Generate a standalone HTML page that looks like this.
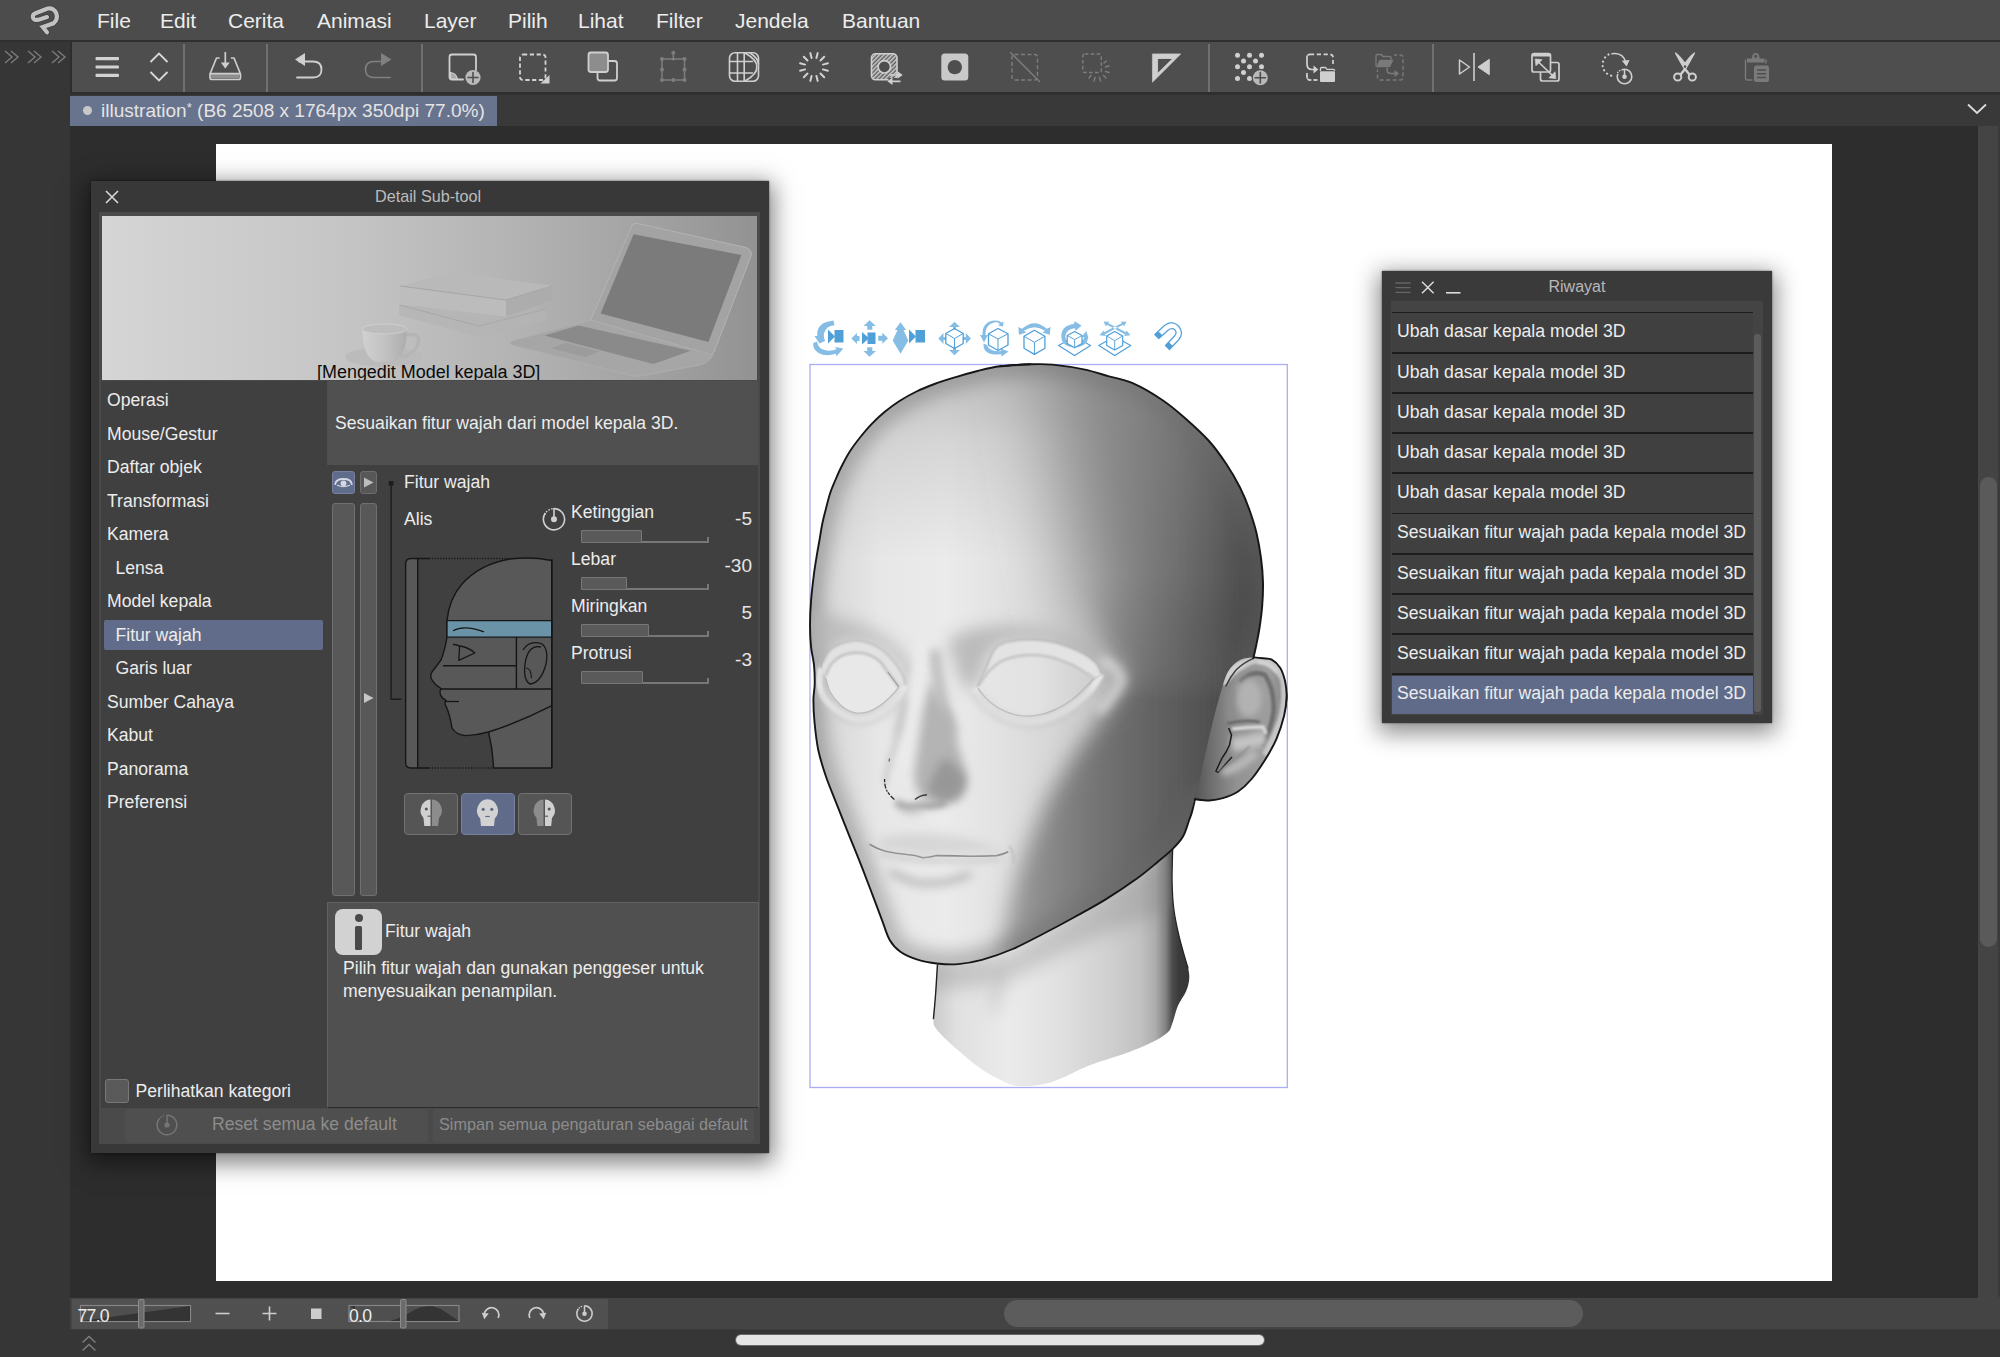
<!DOCTYPE html>
<html lang="id">
<head>
<meta charset="utf-8">
<title>illustration - Detail Sub-tool</title>
<style>
*{box-sizing:border-box;margin:0;padding:0}
html,body{width:2000px;height:1357px;overflow:hidden;background:#2d2d2d}
body{font-family:"Liberation Sans",sans-serif;color:#e6e6e6;position:relative}
.a{position:absolute}
.t{position:absolute;white-space:nowrap;line-height:1}
#menubar{left:0;top:0;width:2000px;height:40px;background:#4c4c4c}
#menuline{left:0;top:40px;width:2000px;height:2px;background:#2f2f2f}
#menubar .t{font-size:21px;top:10px;color:#ececec}
#leftstrip{left:0;top:42px;width:70px;height:1315px;background:#363636}
#toolbar{left:72px;top:42px;width:1928px;height:50px;background:#4e4e4e}
#toolline{left:70px;top:92px;width:1930px;height:3px;background:#2f2f2f}
#tabbar{left:70px;top:95px;width:1930px;height:31px;background:#393939}
#tab{left:70px;top:95.5px;width:427px;height:30px;background:#68738d}
#workarea{left:70px;top:126px;width:1907px;height:1172px;background:#2d2d2d}
#paper{left:216px;top:144px;width:1616px;height:1137px;background:#fff}
#vscroll{left:1978px;top:126px;width:22px;height:1172px;background:#444}
#bottombar{left:70px;top:1298px;width:1930px;height:32px;background:#444}
#footer{left:70px;top:1330px;width:1930px;height:27px;background:#363636}
.sep{position:absolute;top:44px;width:1.6px;height:48px;background:#707070}
</style>
</head>
<body>
<!-- MENU BAR -->
<div class="a" id="menubar">
<span class="t" style="left:97px">File</span>
<span class="t" style="left:160px">Edit</span>
<span class="t" style="left:228px">Cerita</span>
<span class="t" style="left:317px">Animasi</span>
<span class="t" style="left:424px">Layer</span>
<span class="t" style="left:508px">Pilih</span>
<span class="t" style="left:578px">Lihat</span>
<span class="t" style="left:656px">Filter</span>
<span class="t" style="left:735px">Jendela</span>
<span class="t" style="left:842px">Bantuan</span>
</div>
<div class="a" id="menuline"></div>
<div class="a" id="leftstrip"></div>
<div class="a" id="toolbar"></div>
<div class="a" id="toolline"></div>
<div class="a" id="tabbar"></div>
<div class="a" id="tab"></div>
<div class="a" id="workarea"></div>
<div class="a" id="paper"></div>
<div class="a" id="vscroll"></div>
<div class="a" id="bottombar"></div>
<div class="a" id="footer"></div>
<!--TOOLBAR-ICONS-START-->
<svg class="a" style="left:0;top:0" width="2000" height="130" viewBox="0 0 2000 130" fill="none" stroke-linecap="round" stroke-linejoin="round">
<!-- app logo -->
<path d="M47 17.100 L38.600 19.700 Q33.500 20.800 32.800 17 Q32.600 14.300 35.500 13.200 L47.500 8.500 Q53.500 7.500 56.200 13 Q58.500 19.500 53.500 23.300 L42.800 27 L47 32.300" stroke="#3a3a3a" stroke-width="5.600" stroke-linecap="round" stroke-linejoin="round"/>
<path d="M47 17.100 L38.600 19.700 Q33.500 20.800 32.800 17 Q32.600 14.300 35.500 13.200 L47.500 8.500 Q53.500 7.500 56.200 13 Q58.500 19.500 53.500 23.300 L42.800 27 L47 32.300" stroke="#c2c2c2" stroke-width="4.200" stroke-linecap="round" stroke-linejoin="miter"/>
<!-- chevrons >> >> >> -->
<g stroke="#7c7c7c" stroke-width="1.4" stroke-linecap="butt" stroke-linejoin="miter">
<path d="M5 51 L12 57 L5 63 M11 51 L18 57 L11 63"/>
<path d="M28 51 L35 57 L28 63 M34 51 L41 57 L34 63"/>
<path d="M52 51 L59 57 L52 63 M58 51 L65 57 L58 63"/>
</g>
<!-- hamburger -->
<g fill="#d2d2d2" stroke="none"><rect x="95.5" y="57" width="23.5" height="3.2" rx="1"/><rect x="95.5" y="65.4" width="23.5" height="3.2" rx="1"/><rect x="95.5" y="73.8" width="23.5" height="3.2" rx="1"/></g>
<!-- up/down -->
<path d="M150.5 62 L159 53.5 L167.5 62 M150.5 72 L159 80.5 L167.5 72" stroke="#d8d8d8" stroke-width="1.8" stroke-linecap="butt" stroke-linejoin="miter"/>
<!-- save -->
<g stroke="#cdcdcd" stroke-width="1.7">
<path d="M219 58 L216.5 58 L210 74 L210 77.5 Q210 79.5 212 79.5 L238.5 79.5 Q240.5 79.5 240.5 77.5 L240.5 74 L234 58 L231.5 58"/>
<path d="M225.3 52.5 L225.3 67"/>
<rect x="211" y="74" width="28.5" height="4.5" fill="#8e8e8e" stroke="none"/>
<path d="M210.3 73.6 L240.2 73.6"/>
</g>
<path d="M220.8 62.5 L229.8 62.5 L225.3 68.5 Z" fill="#cdcdcd"/>
<!-- undo -->
<path d="M299 61.5 L313 61.5 Q321.5 61.5 321.5 69.5 Q321.5 77.5 313 77.5 L297 77.5" stroke="#cfcfcf" stroke-width="1.8"/>
<path d="M305 53 L305 66 L295 59.5 Z" fill="#cfcfcf"/>
<!-- redo (dim) -->
<path d="M386 61.5 L374 61.5 Q365.5 61.5 365.5 69.5 Q365.5 77.5 374 77.5 L390 77.5" stroke="#808080" stroke-width="1.6"/>
<path d="M381 53 L381 66 L391.5 59.5 Z" fill="#808080"/>
<!-- new layer -->
<path d="M476 70 L476 57 Q476 54.5 473.5 54.5 L452 54.5 Q449.5 54.5 449.5 57 L449.5 77 Q449.5 79.5 452 79.5 L463 79.5" stroke="#cfcfcf" stroke-width="1.8"/>
<path d="M450.5 72.5 Q456 73 457.5 79 L450.5 79 Z" fill="#a9a9a9" stroke="#cfcfcf" stroke-width="1.2"/>
<circle cx="473" cy="77.5" r="7.6" fill="#b9b9b9"/>
<path d="M473 72.5 L473 82.5 M468 77.5 L478 77.5" stroke="#4e4e4e" stroke-width="1.6"/>
<!-- dashed select -->
<rect x="520" y="54.5" width="25.5" height="25.5" rx="3" stroke="#d2d2d2" stroke-width="1.8" stroke-dasharray="4.2 2.6" stroke-linecap="butt"/>
<path d="M549.5 75 L549.5 83.5 L540.5 83.5 Z" fill="#cfcfcf"/>
<!-- overlapping squares -->
<rect x="597.5" y="61" width="19.5" height="19.5" rx="2.5" stroke="#cfcfcf" stroke-width="1.8"/>
<rect x="588.5" y="52.5" width="19.5" height="19.5" rx="2.5" fill="#8d8d8d" stroke="#cfcfcf" stroke-width="1.8"/>
<!-- transform (dim) -->
<g stroke="#7e7e7e" stroke-width="1.5"><rect x="662" y="59" width="22.5" height="21"/><path d="M673.3 59 L673.3 53"/></g>
<g fill="#7e7e7e"><circle cx="673.3" cy="52.8" r="2"/><circle cx="662" cy="59" r="2"/><circle cx="684.5" cy="59" r="2"/><circle cx="662" cy="69.5" r="2"/><circle cx="684.5" cy="69.5" r="2"/><circle cx="662" cy="80" r="2"/><circle cx="673.3" cy="80" r="2"/><circle cx="684.5" cy="80" r="2"/><circle cx="673.3" cy="59" r="1.6"/></g>
<!-- mesh -->
<g stroke="#cfcfcf" stroke-width="1.600">
<rect x="729.500" y="52.800" width="29" height="28.500" rx="5.500"/>
<path d="M737.500 53 L737.500 81 M744.200 53 L744.200 81 M729.500 61.500 L752.500 61.500 M729.500 73 L752.500 73"/>
<path d="M745 53 Q757.500 60 756.800 67 Q757.500 74 745 81"/>
<path d="M750 53 Q758 58 758.500 64"/>
</g>
<!-- spinner -->
<g stroke="#d2d2d2" stroke-width="2" stroke-linecap="round" id="spin">
<path d="M816.4 58.1 L817.7 53.1"/><path d="M820.5 60.5 L824.2 56.8"/><path d="M822.9 64.6 L827.9 63.3"/><path d="M822.9 69.4 L827.9 70.7"/><path d="M820.5 73.5 L824.2 77.2"/><path d="M816.4 75.9 L817.7 80.9"/><path d="M811.6 75.9 L810.3 80.9"/><path d="M807.5 73.5 L803.8 77.2"/><path d="M805.1 69.4 L800.1 70.7"/><path d="M805.1 64.6 L800.1 63.3"/><path d="M807.5 60.5 L803.8 56.8"/><path d="M811.6 58.1 L810.3 53.1"/>
</g>
<!-- quick mask -->
<defs><pattern id="hat" width="3" height="3" patternUnits="userSpaceOnUse" patternTransform="rotate(45)"><rect width="3" height="3" fill="#5a5a5a"/><rect width="1.6" height="3" fill="#c9c9c9"/></pattern></defs>
<rect x="871.5" y="53.8" width="25.5" height="26" rx="4" fill="url(#hat)" stroke="#cfcfcf" stroke-width="1.6"/>
<circle cx="884.3" cy="66.8" r="6.2" fill="#4e4e4e" stroke="#cfcfcf" stroke-width="1.7"/>
<path d="M888.5 72 L900 72 L900 78 L888.5 78 L888.5 84.5 L901 84.5 L901 72 Z" fill="#4e4e4e" stroke="none"/>
<path d="M889.5 75 L899 75 M891 81.3 L900.5 81.3" stroke="#cfcfcf" stroke-width="1.7" stroke-linecap="butt"/>
<path d="M897.5 71.3 L902.7 75 L897.5 78.7 Z M892.5 77.6 L887.3 81.3 L892.5 85 Z" fill="#cfcfcf"/>
<!-- filled mask -->
<rect x="941.3" y="53.6" width="27" height="27" rx="3.5" fill="#c9c9c9"/>
<circle cx="954.8" cy="67.1" r="7.2" fill="#4e4e4e"/>
<!-- dashed diag (dim) -->
<g stroke="#7e7e7e" stroke-width="1.4"><rect x="1012" y="54.5" width="25.5" height="25.5" rx="2.5" stroke-dasharray="4 2.5" stroke-linecap="butt"/><path d="M1010.5 52.5 L1039.5 81.5"/></g>
<!-- dashed rays (dim) -->
<g stroke="#7e7e7e" stroke-width="1.4"><rect x="1082.8" y="54" width="18.5" height="18.5" rx="2" stroke-dasharray="3.6 2.3" stroke-linecap="butt"/>
<path d="M1104 63 L1106.5 61 M1105.5 67 L1109 66 M1105.5 71.5 L1109 72.5 M1103.5 75.5 L1106 78 M1099.5 77.5 L1100.5 81 M1095 77.5 L1094 81 M1091 75.5 L1089 78"/></g>
<!-- triangle ruler -->
<path d="M1152.8 54 L1180.6 54 L1152.8 81.8 Z M1157.6 58.800 L1157.600 73.500 L1172.500 58.800 Z" fill="#cfcfcf" fill-rule="evenodd" stroke="#cfcfcf" stroke-width="0.8"/>
<!-- dots + plus -->
<g fill="#cfcfcf">
<circle cx="1237.5" cy="55.2" r="2.5"/><circle cx="1249.5" cy="55.2" r="2.5"/><circle cx="1261.5" cy="55.2" r="2.5"/>
<circle cx="1243.5" cy="61" r="2.5"/><circle cx="1255.5" cy="61" r="2.5"/>
<circle cx="1237.5" cy="66.8" r="2.5"/><circle cx="1249.5" cy="66.8" r="2.5"/><circle cx="1261.5" cy="66.8" r="2.5"/>
<circle cx="1243.5" cy="72.6" r="2.5"/>
<circle cx="1237.5" cy="78.4" r="2.5"/><circle cx="1249.5" cy="78.4" r="2.5"/>
</g>
<circle cx="1260.3" cy="77.8" r="8.6" fill="#4e4e4e"/><circle cx="1260.3" cy="77.8" r="7.5" fill="#b9b9b9"/>
<path d="M1260.3 72.6 L1260.3 83 M1255.1 77.8 L1265.5 77.8" stroke="#4e4e4e" stroke-width="1.6"/>
<!-- dashed -> folder -->
<rect x="1307" y="54.3" width="26" height="25.7" rx="3" stroke="#d2d2d2" stroke-width="1.7" stroke-dasharray="4.2 2.6" stroke-linecap="butt"/>
<rect x="1303" y="58" width="14" height="15" fill="#4e4e4e" stroke="none"/>
<rect x="1318" y="66" width="19" height="18" fill="#4e4e4e" stroke="none"/>
<path d="M1307 56 L1307 64 Q1307 69.5 1312 69.5 L1315 69.5" stroke="#d2d2d2" stroke-width="1.7"/>
<path d="M1313.5 65.5 L1318.3 69.5 L1313.5 73.5 Z" fill="#d2d2d2"/>
<path d="M1307 75 L1307 77.5 Q1307 80 1309.5 80 L1316 80" stroke="#d2d2d2" stroke-width="1.7" stroke-dasharray="3 2.4" stroke-linecap="butt"/>
<path d="M1320.5 70.5 L1320.5 68.5 Q1320.5 67.5 1321.5 67.5 L1325.5 67.5 L1327 69.3 L1333.5 69.3 Q1334.5 69.3 1334.5 70.3" stroke="#d2d2d2" stroke-width="1.3"/>
<rect x="1320" y="71.3" width="15" height="10.7" rx="1" fill="#cfcfcf"/>
<!-- folder -> dashed (dim) -->
<g stroke="#7a7a7a" stroke-width="1.4"><rect x="1377.5" y="55" width="25.5" height="25" rx="2.5" stroke-dasharray="4 2.5" stroke-linecap="butt"/></g>
<rect x="1373" y="52" width="21" height="17.5" fill="#4e4e4e"/>
<path d="M1376 66 L1376 55.5 Q1376 54.5 1377 54.5 L1381.5 54.5 L1383 56.5 L1390 56.5 Q1391 56.5 1391 57.5 L1391 59.5" stroke="#7a7a7a" stroke-width="1.3"/>
<path d="M1379.5 59.7 L1393.5 59.7 L1390 67.3 L1376 67.3 Z" fill="#7a7a7a"/>
<rect x="1384" y="67.5" width="16" height="9" fill="#4e4e4e"/>
<path d="M1387 68 L1387 70 Q1387 73.5 1391 73.5 L1395 73.5" stroke="#7a7a7a" stroke-width="1.5"/>
<path d="M1394.5 70 L1399 73.5 L1394.5 77 Z" fill="#7a7a7a"/>
<!-- mirror -->
<path d="M1474 53 L1474 81" stroke="#cfcfcf" stroke-width="1.6" stroke-linecap="butt"/>
<path d="M1459.5 60 L1469.5 67 L1459.5 74 Z" stroke="#cfcfcf" stroke-width="1.5"/>
<path d="M1489 59.5 L1478 67 L1489 74.5 Z" fill="#cfcfcf" stroke="#cfcfcf" stroke-width="1"/>
<!-- resize squares -->
<rect x="1540.5" y="62.5" width="18.5" height="18.5" rx="2" stroke="#cfcfcf" stroke-width="1.7"/>
<rect x="1532" y="53.5" width="18.5" height="18.5" rx="2" fill="#4e4e4e" stroke="#cfcfcf" stroke-width="1.7"/>
<path d="M1532.5 55.2 L1550 55.2" stroke="#cfcfcf" stroke-width="2.6" stroke-linecap="butt"/>
<path d="M1538.5 62 L1552.5 75.5" stroke="#cfcfcf" stroke-width="1.7"/>
<path d="M1535.5 59 L1542 59.7 L1536.2 65.5 Z M1555.5 78.5 L1549 77.8 L1554.8 72 Z" fill="#cfcfcf" stroke="#cfcfcf" stroke-width="0.8"/>
<!-- rotate dotted -->
<path d="M1612 53.8 Q1623 52 1626.2 63" stroke="#cfcfcf" stroke-width="1.6"/>
<path d="M1621.8 60.8 L1629.6 60 L1626.6 66.5 Z" fill="#cfcfcf"/>
<path d="M1608.5 54.5 A11.5 11.5 0 0 0 1613 76" stroke="#cfcfcf" stroke-width="2.2" stroke-dasharray="0.1 4.4" stroke-linecap="round"/>
<circle cx="1624.5" cy="76.5" r="7.3" stroke="#cfcfcf" stroke-width="1.6"/>
<rect x="1614" y="66" width="7.5" height="8" fill="#4e4e4e"/>
<path d="M1617.7 72.5 A7.3 7.3 0 0 1 1621.5 69.8" stroke="#cfcfcf" stroke-width="1.6" stroke-dasharray="0.1 2.6"/>
<circle cx="1624.5" cy="76.8" r="2.3" fill="#cfcfcf"/><path d="M1624.5 76 L1624.5 70.5" stroke="#cfcfcf" stroke-width="1.5"/>
<!-- scissors -->
<path d="M1675.5 53 Q1678 58 1685 70 L1687 66.5 Q1681 57 1675.5 53 Z M1694.5 53 Q1692 58 1685 70 L1683 66.5 Q1689 57 1694.5 53 Z" fill="#cfcfcf" stroke="#cfcfcf" stroke-width="1.2"/>
<path d="M1685 69 L1681 74 M1685 69 L1689 74" stroke="#cfcfcf" stroke-width="2.4"/>
<circle cx="1677.7" cy="77" r="3.6" stroke="#cfcfcf" stroke-width="2"/><circle cx="1692.3" cy="77" r="3.6" stroke="#cfcfcf" stroke-width="2"/>
<!-- clipboard (dim) -->
<g stroke="#7a7a7a" stroke-width="1.4"><path d="M1752 80 L1747.5 80 Q1745.5 80 1745.5 78 L1745.5 60"/><path d="M1766 60 L1766 63"/></g>
<path d="M1747 58.5 L1752 58.5 Q1752 53 1755.7 53 Q1759.5 53 1759.5 58.5 L1764.5 58.5 L1764.5 62.5 L1747 62.5 Z" fill="#7a7a7a"/>
<circle cx="1755.7" cy="56.3" r="1.5" fill="#4e4e4e"/>
<rect x="1754" y="65.5" width="15" height="16.5" rx="2.5" fill="#7a7a7a"/>
<path d="M1757.5 70 L1765.5 70 M1757.5 73.8 L1765.5 73.8 M1757.5 77.6 L1765.5 77.6" stroke="#4e4e4e" stroke-width="1.5"/>
<!-- tab bar chevron -->
<path d="M1968 104.5 L1977 113 L1986 104.5" stroke="#dcdcdc" stroke-width="1.8" stroke-linecap="butt" stroke-linejoin="miter"/>
</svg>
<div class="sep" style="left:183px"></div><div class="sep" style="left:266px"></div><div class="sep" style="left:421px"></div><div class="sep" style="left:1208px"></div><div class="sep" style="left:1432px"></div>
<div class="a" style="left:83px;top:105.5px;width:9px;height:9px;border-radius:5px;background:#c8c8c8"></div>
<span class="t" id="tabtxt" style="left:101px;top:101px;font-size:19.05px;color:#e4e4e4">illustration<span style="font-size:13px;vertical-align:5px">*</span> (B6 2508 x 1764px 350dpi 77.0%)</span>
<!--TOOLBAR-ICONS-END-->
<!--CANVAS-START-->
<svg class="a" style="left:800px;top:300px" width="500" height="800" viewBox="800 300 500 800" fill="none">
<defs>
<clipPath id="hc"><path d="M1030.0 364.3 C1038.8 364.0 1043.5 363.8 1052.5 364.6 C1061.5 365.5 1074.4 367.4 1083.8 369.4 C1093.2 371.3 1100.8 374.0 1108.9 376.3 C1117.1 378.6 1123.7 379.2 1132.7 383.2 C1141.7 387.2 1154.1 394.5 1163.0 400.5 C1171.9 406.5 1178.3 412.2 1186.0 419.0 C1193.7 425.8 1202.3 433.6 1209.0 441.0 C1215.7 448.4 1220.8 455.8 1226.0 463.5 C1231.2 471.2 1236.1 479.8 1240.0 487.5 C1243.9 495.2 1246.8 502.4 1249.5 510.0 C1252.2 517.6 1254.6 525.0 1256.5 533.0 C1258.4 541.0 1259.9 549.8 1261.0 558.0 C1262.1 566.2 1262.8 574.0 1263.0 582.0 C1263.2 590.0 1262.8 598.3 1262.2 606.0 C1261.6 613.7 1260.5 621.5 1259.5 628.0 C1258.5 634.5 1257.3 639.9 1256.3 645.0 C1255.3 650.1 1253.8 656.2 1253.3 658.4 C1252.8 660.6 1251.8 658.5 1253.3 658.4 C1254.8 658.3 1259.1 657.8 1262.1 658.0 C1265.0 658.2 1268.5 658.1 1271.0 659.5 C1273.5 660.9 1274.9 663.6 1276.9 666.5 C1278.9 669.4 1281.2 673.2 1282.8 676.9 C1284.4 680.6 1285.7 684.9 1286.4 688.7 C1287.2 692.6 1287.7 695.5 1287.3 700.0 C1286.9 704.5 1285.9 709.3 1284.1 715.8 C1282.3 722.3 1279.7 731.4 1276.5 738.8 C1273.3 746.1 1269.2 753.2 1265.0 759.9 C1260.8 766.6 1256.1 773.7 1251.6 779.0 C1247.1 784.3 1242.9 788.3 1238.1 791.5 C1233.3 794.7 1227.6 796.7 1222.8 798.2 C1218.0 799.7 1214.0 800.3 1209.4 800.5 C1204.8 800.7 1197.9 797.3 1195.0 799.2 C1192.1 801.1 1193.0 808.5 1192.0 812.0 C1191.0 815.5 1190.7 815.9 1189.2 820.0 C1187.7 824.1 1185.8 831.7 1183.0 836.5 C1180.2 841.3 1177.0 844.6 1172.7 848.9 C1168.4 853.2 1163.3 857.3 1157.3 862.3 C1151.3 867.3 1145.2 872.6 1136.6 878.8 C1128.0 885.0 1116.0 893.0 1105.7 899.4 C1095.4 905.8 1085.0 911.3 1074.7 917.0 C1064.4 922.7 1054.1 928.2 1043.8 933.5 C1033.5 938.8 1023.1 944.6 1012.8 949.0 C1002.5 953.4 991.0 957.4 981.9 959.9 C972.8 962.4 965.6 963.5 958.1 964.1 C950.6 964.7 943.6 964.2 936.8 963.5 C930.0 962.8 923.6 961.7 917.5 959.7 C911.4 957.8 905.0 955.1 900.4 951.8 C895.8 948.5 892.7 945.2 889.7 940.0 C886.7 934.8 885.1 928.3 882.3 920.8 C879.4 913.3 876.0 904.0 872.6 895.1 C869.2 886.2 865.9 877.4 862.0 867.4 C858.1 857.4 853.4 846.0 849.1 835.3 C844.8 824.6 840.2 813.2 836.3 803.2 C832.4 793.2 828.6 784.4 825.6 775.5 C822.6 766.6 820.1 758.7 818.2 749.8 C816.4 740.9 815.3 730.3 814.5 722.0 C813.7 713.7 813.4 706.3 813.4 700.0 C813.4 693.7 814.6 690.0 814.7 684.2 C814.8 678.4 814.6 671.1 814.0 665.0 C813.4 658.9 811.8 654.0 811.1 647.4 C810.4 640.8 810.0 633.2 810.0 625.3 C810.0 617.4 810.4 608.8 811.1 600.2 C811.8 591.6 813.0 581.6 814.0 573.7 C815.0 565.8 816.3 558.6 817.2 553.0 C818.1 547.4 818.7 544.7 819.5 540.0 C820.3 535.3 821.1 529.8 822.1 524.7 C823.1 519.6 824.4 514.6 825.8 509.3 C827.1 504.0 828.6 497.9 830.2 493.0 C831.8 488.1 833.5 484.5 835.4 480.0 C837.3 475.5 839.3 470.8 841.8 466.0 C844.2 461.2 846.9 455.9 850.1 451.0 C853.3 446.1 857.2 441.0 860.8 436.5 C864.4 432.0 867.8 427.9 871.8 423.8 C875.8 419.7 879.9 415.8 884.5 412.0 C889.1 408.2 894.2 404.4 899.5 401.0 C904.8 397.6 910.7 394.3 916.5 391.5 C922.3 388.7 928.1 386.4 934.5 384.0 C940.9 381.6 947.8 379.5 955.0 377.3 C962.2 375.1 970.0 372.9 977.5 371.0 C985.0 369.1 991.2 367.3 1000.0 366.2 C1008.8 365.1 1021.2 364.6 1030.0 364.3 Z"/></clipPath>
<clipPath id="nc"><path d="M937.5 950.0 C937.3 954.2 936.8 967.4 936.5 975.0 C936.2 982.6 936.0 988.0 935.5 995.4 C935.0 1002.8 933.1 1013.3 933.4 1019.1 C933.7 1024.9 932.9 1024.7 937.5 1030.4 C942.1 1036.1 953.9 1046.6 961.3 1053.1 C968.7 1059.6 975.0 1064.9 981.9 1069.6 C988.8 1074.2 996.3 1078.2 1002.5 1081.0 C1008.7 1083.8 1012.1 1085.7 1019.0 1086.2 C1025.9 1086.7 1036.2 1085.5 1043.8 1084.0 C1051.4 1082.5 1056.8 1080.0 1064.4 1076.9 C1072.0 1073.8 1078.9 1069.5 1089.2 1065.5 C1099.5 1061.5 1116.0 1056.9 1126.3 1053.1 C1136.6 1049.3 1144.1 1046.2 1151.0 1042.8 C1157.9 1039.4 1164.0 1035.9 1167.6 1032.5 C1171.2 1029.1 1171.0 1026.7 1172.7 1022.2 C1174.4 1017.7 1175.7 1010.9 1177.9 1005.7 C1180.1 1000.5 1184.2 995.7 1186.1 991.2 C1188.0 986.7 1188.8 982.7 1189.2 978.9 C1189.6 975.1 1188.9 972.0 1188.2 968.5 C1187.5 965.0 1186.6 963.7 1185.1 958.2 C1183.5 952.7 1180.8 943.8 1178.9 935.5 C1177.0 927.2 1174.9 917.6 1173.8 908.7 C1172.7 899.8 1172.3 891.9 1172.1 881.9 C1171.9 871.9 1172.6 856.7 1172.7 848.9 C1172.8 841.1 1172.7 837.3 1172.7 835.0 L1100 850 L960 930 Z"/></clipPath>
<clipPath id="ec"><path d="M1254.4 657.4 C1258.2 657.1 1260.1 657.9 1263.0 658.3 C1265.9 658.7 1268.8 658.1 1271.7 659.7 C1274.6 661.3 1278.1 664.3 1280.3 667.9 C1282.5 671.5 1284.0 676.5 1285.1 681.3 C1286.1 686.1 1286.8 690.9 1286.6 696.6 C1286.4 702.4 1285.8 708.8 1284.1 715.8 C1282.4 722.8 1279.7 731.4 1276.5 738.8 C1273.3 746.1 1269.2 753.2 1265.0 759.9 C1260.8 766.6 1256.1 773.7 1251.6 779.0 C1247.1 784.3 1242.9 788.3 1238.1 791.5 C1233.3 794.7 1227.6 796.7 1222.8 798.2 C1218.0 799.7 1214.0 800.3 1209.4 800.5 C1204.8 800.7 1196.9 801.3 1195.0 799.2 C1193.1 797.1 1196.5 794.5 1198.0 788.0 C1199.5 781.5 1201.7 770.5 1204.0 760.0 C1206.3 749.5 1209.3 735.8 1212.0 725.0 C1214.7 714.2 1217.3 703.8 1220.0 695.0 C1222.7 686.2 1224.7 677.8 1228.0 672.0 C1231.3 666.2 1235.6 662.4 1240.0 660.0 C1244.4 657.6 1250.6 657.7 1254.4 657.4 Z"/></clipPath>
<linearGradient id="hbase" gradientUnits="userSpaceOnUse" x1="806" y1="0" x2="1270" y2="0">
<stop offset="0" stop-color="#c4c4c4"/><stop offset=".05" stop-color="#d8d8d8"/><stop offset=".16" stop-color="#e7e7e7"/><stop offset=".3" stop-color="#ebebeb"/><stop offset=".42" stop-color="#e2e2e2"/><stop offset=".55" stop-color="#d4d4d4"/><stop offset=".7" stop-color="#c8c8c8"/><stop offset="1" stop-color="#c0c0c0"/>
</linearGradient>
<linearGradient id="shg" gradientUnits="userSpaceOnUse" x1="1000" y1="0" x2="1270" y2="0">
<stop offset="0" stop-color="#a6a6a6"/><stop offset=".2" stop-color="#989898"/><stop offset=".38" stop-color="#8a8a8a"/><stop offset=".56" stop-color="#7a7a7a"/><stop offset=".74" stop-color="#666"/><stop offset=".88" stop-color="#4e4e4e"/><stop offset="1" stop-color="#3a3a3a"/>
</linearGradient>
<linearGradient id="topdark" gradientUnits="userSpaceOnUse" x1="0" y1="362" x2="0" y2="560"><stop offset="0" stop-color="#8a8a8a" stop-opacity=".5"/><stop offset=".4" stop-color="#8a8a8a" stop-opacity=".22"/><stop offset="1" stop-color="#8a8a8a" stop-opacity="0"/></linearGradient>
<linearGradient id="nbase" gradientUnits="userSpaceOnUse" x1="930" y1="0" x2="1192" y2="0">
<stop offset="0" stop-color="#c8c8c8"/><stop offset=".1" stop-color="#e0e0e0"/><stop offset=".3" stop-color="#ebebeb"/><stop offset=".5" stop-color="#e0e0e0"/><stop offset=".68" stop-color="#d0d0d0"/><stop offset=".8" stop-color="#c2c2c2"/><stop offset=".86" stop-color="#adadad"/><stop offset=".9" stop-color="#828282"/><stop offset=".925" stop-color="#4c4c4c"/><stop offset=".95" stop-color="#3a3a3a"/><stop offset="1" stop-color="#343434"/>
</linearGradient>
<linearGradient id="earg" gradientUnits="userSpaceOnUse" x1="1195" y1="0" x2="1288" y2="0"><stop offset="0" stop-color="#565656"/><stop offset=".2" stop-color="#727272"/><stop offset=".45" stop-color="#929292"/><stop offset=".8" stop-color="#9e9e9e"/><stop offset="1" stop-color="#808080"/></linearGradient>
<linearGradient id="chk" gradientUnits="userSpaceOnUse" x1="1020" y1="0" x2="1150" y2="0"><stop offset="0" stop-color="#8e8e8e"/><stop offset=".45" stop-color="#888" stop-opacity=".9"/><stop offset="1" stop-color="#777" stop-opacity="0"/></linearGradient>
<linearGradient id="reyeg" gradientUnits="userSpaceOnUse" x1="980" y1="0" x2="1095" y2="0"><stop offset="0" stop-color="#e6e6e6"/><stop offset=".5" stop-color="#e2e2e2"/><stop offset="1" stop-color="#cecece"/></linearGradient>
<linearGradient id="shg2" gradientUnits="userSpaceOnUse" x1="1000" y1="0" x2="1270" y2="0">
<stop offset="0" stop-color="#a0a0a0"/><stop offset=".12" stop-color="#909090"/><stop offset=".25" stop-color="#808080"/><stop offset=".4" stop-color="#707070"/><stop offset=".55" stop-color="#646464"/><stop offset=".7" stop-color="#575757"/><stop offset=".85" stop-color="#4a4a4a"/><stop offset="1" stop-color="#3a3a3a"/>
</linearGradient>
<linearGradient id="lmg" gradientUnits="userSpaceOnUse" x1="0" y1="575" x2="0" y2="700"><stop offset="0" stop-color="#000"/><stop offset="1" stop-color="#fff"/></linearGradient>
<mask id="lm" maskUnits="userSpaceOnUse" x="700" y="200" width="800" height="1000"><rect x="700" y="200" width="800" height="1000" fill="url(#lmg)"/></mask>
<filter id="b22" filterUnits="userSpaceOnUse" x="700" y="100" width="900" height="1100"><feGaussianBlur stdDeviation="36"/></filter>
<filter id="b11" filterUnits="userSpaceOnUse" x="700" y="200" width="800" height="1000"><feGaussianBlur stdDeviation="11"/></filter>
<filter id="b3" filterUnits="userSpaceOnUse" x="790" y="300" width="520" height="800"><feGaussianBlur stdDeviation="3"/></filter>
<filter id="b5" filterUnits="userSpaceOnUse" x="790" y="300" width="520" height="800"><feGaussianBlur stdDeviation="5"/></filter>
<filter id="b8" filterUnits="userSpaceOnUse" x="790" y="300" width="520" height="800"><feGaussianBlur stdDeviation="8"/></filter>
<filter id="b14" filterUnits="userSpaceOnUse" x="790" y="300" width="520" height="800"><feGaussianBlur stdDeviation="14"/></filter>
<filter id="b1" filterUnits="userSpaceOnUse" x="790" y="300" width="520" height="800"><feGaussianBlur stdDeviation="1.2"/></filter>
</defs>
<g id="manip">
<!-- 1 camera orbit -->
<g fill="#86bde4">
<path d="M833.500 320.600 L834.500 325.200 Q826 325.500 823.800 334 Q823.500 338 825.200 340.800 L819.500 343.500 L814.500 336 L817.200 336 Q816.500 324 828.500 321.500 Z"/>
<path d="M813.300 343 L817 341.500 Q818 349.500 827 350.600 Q833 351 836.500 349.200 L835 347 L843.300 348.400 L836.500 356.300 L835.800 353.800 Q826 357 818.500 353 Q812.500 349 813.300 343 Z"/>
</g>
<path d="M828 329.500 L835 336.500 L828 343.500 Z" fill="#4f9fd9"/><rect x="834.500" y="330" width="9" height="12.500" fill="#4f9fd9"/>
<!-- 2 camera pan -->
<g fill="#86bde4">
<path d="M869.500 320.300 L876 326 L872.300 326 L872.300 329.800 L867.200 329.800 L867.200 326 L863.500 326 Z"/>
<path d="M869.500 356.800 L876 351 L872.300 351 L872.300 347.200 L867.200 347.200 L867.200 351 L863.500 351 Z"/>
<path d="M851.300 338.500 L857 333 L857 336 L859.500 336 L859.500 341 L857 341 L857 344 Z"/>
<path d="M888 338.300 L882.300 332.800 L882.300 335.800 L878.200 335.800 L878.200 340.800 L882.300 340.800 L882.300 343.800 Z"/>
</g>
<path d="M862 332 L869 338.200 L862 344.500 Z" fill="#4f9fd9"/><rect x="867.500" y="332.500" width="8" height="11.500" fill="#4f9fd9"/>
<!-- 3 camera dolly -->
<path d="M900.500 322.300 L906.200 330 L903.500 330 L908.300 340.500 L900.500 353.800 L892.700 340.500 L897.500 330 L894.800 330 Z" fill="#86bde4"/>
<path d="M909 329.500 L916 336.500 L909 343.500 Z" fill="#4f9fd9"/><rect x="915.500" y="330" width="9.500" height="12.500" fill="#4f9fd9"/>
<!-- 4 cube move -->
<g fill="#86bde4">
<path d="M954.500 321.800 L960 327 L956 327 L956 329.500 L953 329.500 L953 327 L949 327 Z"/>
<path d="M954.500 355.200 L960 350 L956 350 L956 347.500 L953 347.500 L953 350 L949 350 Z"/>
<path d="M938.300 338.500 L943.500 333 L943.500 337 L946 337 L946 340 L943.500 340 L943.500 344 Z"/>
<path d="M971 338.500 L965.800 333 L965.800 337 L963.300 337 L963.300 340 L965.800 340 L965.800 344 Z"/>
</g>
<g stroke="#4f9fd9" stroke-width="1.300" fill="none" stroke-linejoin="round"><path d="M954.500 328.500 L963.200 333.500 L963.200 343.500 L954.500 348.500 L945.800 343.500 L945.800 333.500 Z"/><path d="M945.800 333.500 L954.500 338.500 L963.200 333.500 M954.500 338.500 L954.500 348.500" stroke-width="1"/></g>
<!-- 5 cube rotate -->
<g fill="#86bde4">
<path d="M996 322 Q985 324 985.500 335 L988 335 L984 342.500 L980 335 L982.500 335 Q982 322 994 320.500 Q999 320 1001.500 322.500 L1003.500 321.500 L1003 326.500 L998 325.500 L1000 324 Q998.500 322.300 996 322 Z"/>
<path d="M983.500 343.500 L987 345 Q989 351 998 351.300 L1001 351 L1000.300 348.300 L1008.500 351.500 L1001.500 356.500 L1001.200 354 Q990 356 985 350.500 Q983 347 983.500 343.500 Z"/>
</g>
<g stroke="#4f9fd9" stroke-width="1.300" fill="none" stroke-linejoin="round"><path d="M998 328.500 L1008 333.800 L1008 345 L998 350.500 L988.500 345 L988.500 333.800 Z" /><path d="M988.500 333.800 L998 339 L1008 333.800 M998 339 L998 350" stroke-width="1"/></g>
<!-- 6 cube tilt -->
<path d="M1019 334.800 L1018.300 327 L1022 328.800 Q1034.400 317.500 1046.800 328.800 L1050.500 327 L1049.800 334.800 L1042.500 332.500 L1045 330.800 Q1034.400 323.500 1023.800 330.800 L1026.300 332.500 Z" fill="#86bde4"/>
<g stroke="#4f9fd9" stroke-width="1.300" fill="none" stroke-linejoin="round"><path d="M1034.400 330.200 L1044.900 336.200 L1044.900 348.300 L1034.400 354.400 L1024 348.300 L1024 336.200 Z"/><path d="M1024 336.200 L1034.400 342.300 L1044.900 336.200 M1034.400 342.300 L1034.400 354.400" stroke-width="1"/></g>
<!-- 7 cube spin on plane -->
<path d="M1058.600 345.500 L1074.600 336.500 L1090.500 345.500 L1074.600 355.500 Z" stroke="#4f9fd9" stroke-width="1.100" fill="none"/>
<path d="M1074 324 Q1061 325.500 1061.300 337 Q1062 346.500 1074.600 347.500 Q1087 346.500 1088.300 337.500 L1086.300 331 L1081.500 337 L1084.200 337.300 Q1083 343.500 1074.600 343.800 Q1065.500 343 1065.300 336.500 Q1066 329 1075 328.300 L1075.500 331 L1081.500 325.500 L1074.500 321.300 Z" fill="#86bde4"/>
<g stroke="#4f9fd9" stroke-width="1.200" fill="#fff" stroke-linejoin="round"><path d="M1074.600 331.500 L1082 335.500 L1082 343.500 L1074.600 347.800 L1067.200 343.500 L1067.200 335.500 Z"/><path d="M1067.200 335.500 L1074.600 339.600 L1082 335.500 M1074.600 339.600 L1074.600 347.800" stroke-width=".9" fill="none"/></g>
<!-- 8 cube snap -->
<path d="M1098.800 345.500 L1114.700 336.500 L1130.700 345.500 L1114.700 355.500 Z" stroke="#4f9fd9" stroke-width="1.100" fill="none"/>
<path d="M1099.500 335.300 L1103.500 330.500 L1104 332.300 L1122 323 L1120.800 321.500 L1126.500 321.800 L1124 326.500 L1123 324.800 L1105 334.200 L1105.800 336 Z M1130.500 335.300 L1126.500 330.500 L1126 332.300 L1108 323 L1109.200 321.500 L1103.500 321.800 L1106 326.500 L1107 324.800 L1125 334.200 L1124.200 336 Z" fill="#86bde4"/>
<g stroke="#4f9fd9" stroke-width="1.200" fill="#fff" stroke-linejoin="round"><path d="M1114.700 331.500 L1122.700 336 L1122.700 345.500 L1114.700 350 L1106.700 345.500 L1106.700 336 Z"/><path d="M1106.700 336 L1114.700 340.600 L1122.700 336 M1114.700 340.600 L1114.700 350" stroke-width=".9" fill="none"/></g>
<!-- 9 magnet -->
<path d="M1154.800 334.500 L1164.500 325.500 Q1172 319.500 1178.500 326 Q1184.500 333 1178.500 340 L1169.500 349.500 L1165.500 345.500 L1174.500 336 Q1177.500 332.500 1174.800 329.800 Q1172 327.200 1168.300 330 L1158.800 338.500 Z" fill="#fff" stroke="#4f9fd9" stroke-width="1.200" stroke-linejoin="round"/>
<path d="M1154.800 334.500 L1158.300 331.300 L1162.300 335.300 L1158.800 338.500 Z M1169.500 349.500 L1165.500 345.500 L1168.800 342 L1172.800 346 Z" fill="#4f9fd9"/>
</g>

<rect x="810" y="364.5" width="477.3" height="723" stroke="#a9adf3" stroke-width="1.3"/>
<!-- neck -->
<path d="M937.5 950.0 C937.3 954.2 936.8 967.4 936.5 975.0 C936.2 982.6 936.0 988.0 935.5 995.4 C935.0 1002.8 933.1 1013.3 933.4 1019.1 C933.7 1024.9 932.9 1024.7 937.5 1030.4 C942.1 1036.1 953.9 1046.6 961.3 1053.1 C968.7 1059.6 975.0 1064.9 981.9 1069.6 C988.8 1074.2 996.3 1078.2 1002.5 1081.0 C1008.7 1083.8 1012.1 1085.7 1019.0 1086.2 C1025.9 1086.7 1036.2 1085.5 1043.8 1084.0 C1051.4 1082.5 1056.8 1080.0 1064.4 1076.9 C1072.0 1073.8 1078.9 1069.5 1089.2 1065.5 C1099.5 1061.5 1116.0 1056.9 1126.3 1053.1 C1136.6 1049.3 1144.1 1046.2 1151.0 1042.8 C1157.9 1039.4 1164.0 1035.9 1167.6 1032.5 C1171.2 1029.1 1171.0 1026.7 1172.7 1022.2 C1174.4 1017.7 1175.7 1010.9 1177.9 1005.7 C1180.1 1000.5 1184.2 995.7 1186.1 991.2 C1188.0 986.7 1188.8 982.7 1189.2 978.9 C1189.6 975.1 1188.9 972.0 1188.2 968.5 C1187.5 965.0 1186.6 963.7 1185.1 958.2 C1183.5 952.7 1180.8 943.8 1178.9 935.5 C1177.0 927.2 1174.9 917.6 1173.8 908.7 C1172.7 899.8 1172.3 891.9 1172.1 881.9 C1171.9 871.9 1172.6 856.7 1172.7 848.9 C1172.8 841.1 1172.7 837.3 1172.7 835.0 L1100 850 L960 930 Z" fill="url(#nbase)"/>
<g clip-path="url(#nc)">
<path d="M930 960 L1000 958 L1180 850 L1200 900 L1100 935 L1000 985 L930 990 Z" fill="#7a7a7a" opacity=".28" filter="url(#b8)"/>
<path d="M1000 962 Q1003 990 990 1010" stroke="#c0c0c0" stroke-width="14" opacity=".5" filter="url(#b8)"/>

</g>
<path d="M937.5 964.4 C937.3 967.0 936.8 974.8 936.5 980.0 C936.2 985.2 936.0 988.9 935.5 995.4 C935.0 1001.9 933.8 1015.1 933.4 1019.1" stroke="#222" stroke-width="1.4"/>
<path d="M1172.7 848.9 C1172.6 854.4 1171.9 871.9 1172.1 881.9 C1172.3 891.9 1172.7 899.8 1173.8 908.7 C1174.9 917.6 1177.0 927.2 1178.9 935.5 C1180.8 943.8 1183.5 952.7 1185.1 958.2 C1186.6 963.7 1187.7 966.8 1188.2 968.5" stroke="#222" stroke-width="1.2"/>
<!-- head -->
<path d="M1030.0 364.3 C1038.8 364.0 1043.5 363.8 1052.5 364.6 C1061.5 365.5 1074.4 367.4 1083.8 369.4 C1093.2 371.3 1100.8 374.0 1108.9 376.3 C1117.1 378.6 1123.7 379.2 1132.7 383.2 C1141.7 387.2 1154.1 394.5 1163.0 400.5 C1171.9 406.5 1178.3 412.2 1186.0 419.0 C1193.7 425.8 1202.3 433.6 1209.0 441.0 C1215.7 448.4 1220.8 455.8 1226.0 463.5 C1231.2 471.2 1236.1 479.8 1240.0 487.5 C1243.9 495.2 1246.8 502.4 1249.5 510.0 C1252.2 517.6 1254.6 525.0 1256.5 533.0 C1258.4 541.0 1259.9 549.8 1261.0 558.0 C1262.1 566.2 1262.8 574.0 1263.0 582.0 C1263.2 590.0 1262.8 598.3 1262.2 606.0 C1261.6 613.7 1260.5 621.5 1259.5 628.0 C1258.5 634.5 1257.3 639.9 1256.3 645.0 C1255.3 650.1 1253.8 656.2 1253.3 658.4 C1252.8 660.6 1251.8 658.5 1253.3 658.4 C1254.8 658.3 1259.1 657.8 1262.1 658.0 C1265.0 658.2 1268.5 658.1 1271.0 659.5 C1273.5 660.9 1274.9 663.6 1276.9 666.5 C1278.9 669.4 1281.2 673.2 1282.8 676.9 C1284.4 680.6 1285.7 684.9 1286.4 688.7 C1287.2 692.6 1287.7 695.5 1287.3 700.0 C1286.9 704.5 1285.9 709.3 1284.1 715.8 C1282.3 722.3 1279.7 731.4 1276.5 738.8 C1273.3 746.1 1269.2 753.2 1265.0 759.9 C1260.8 766.6 1256.1 773.7 1251.6 779.0 C1247.1 784.3 1242.9 788.3 1238.1 791.5 C1233.3 794.7 1227.6 796.7 1222.8 798.2 C1218.0 799.7 1214.0 800.3 1209.4 800.5 C1204.8 800.7 1197.9 797.3 1195.0 799.2 C1192.1 801.1 1193.0 808.5 1192.0 812.0 C1191.0 815.5 1190.7 815.9 1189.2 820.0 C1187.7 824.1 1185.8 831.7 1183.0 836.5 C1180.2 841.3 1177.0 844.6 1172.7 848.9 C1168.4 853.2 1163.3 857.3 1157.3 862.3 C1151.3 867.3 1145.2 872.6 1136.6 878.8 C1128.0 885.0 1116.0 893.0 1105.7 899.4 C1095.4 905.8 1085.0 911.3 1074.7 917.0 C1064.4 922.7 1054.1 928.2 1043.8 933.5 C1033.5 938.8 1023.1 944.6 1012.8 949.0 C1002.5 953.4 991.0 957.4 981.9 959.9 C972.8 962.4 965.6 963.5 958.1 964.1 C950.6 964.7 943.6 964.2 936.8 963.5 C930.0 962.8 923.6 961.7 917.5 959.7 C911.4 957.8 905.0 955.1 900.4 951.8 C895.8 948.5 892.7 945.2 889.7 940.0 C886.7 934.8 885.1 928.3 882.3 920.8 C879.4 913.3 876.0 904.0 872.6 895.1 C869.2 886.2 865.9 877.4 862.0 867.4 C858.1 857.4 853.4 846.0 849.1 835.3 C844.8 824.6 840.2 813.2 836.3 803.2 C832.4 793.2 828.6 784.4 825.6 775.5 C822.6 766.6 820.1 758.7 818.2 749.8 C816.4 740.9 815.3 730.3 814.5 722.0 C813.7 713.7 813.4 706.3 813.4 700.0 C813.4 693.7 814.6 690.0 814.7 684.2 C814.8 678.4 814.6 671.1 814.0 665.0 C813.4 658.9 811.8 654.0 811.1 647.4 C810.4 640.8 810.0 633.2 810.0 625.3 C810.0 617.4 810.4 608.8 811.1 600.2 C811.8 591.6 813.0 581.6 814.0 573.7 C815.0 565.8 816.3 558.6 817.2 553.0 C818.1 547.4 818.7 544.7 819.5 540.0 C820.3 535.3 821.1 529.8 822.1 524.7 C823.1 519.6 824.4 514.6 825.8 509.3 C827.1 504.0 828.6 497.9 830.2 493.0 C831.8 488.1 833.5 484.5 835.4 480.0 C837.3 475.5 839.3 470.8 841.8 466.0 C844.2 461.2 846.9 455.9 850.1 451.0 C853.3 446.1 857.2 441.0 860.8 436.5 C864.4 432.0 867.8 427.9 871.8 423.8 C875.8 419.7 879.9 415.8 884.5 412.0 C889.1 408.2 894.2 404.4 899.5 401.0 C904.8 397.6 910.7 394.3 916.5 391.5 C922.3 388.7 928.1 386.4 934.5 384.0 C940.9 381.6 947.8 379.5 955.0 377.3 C962.2 375.1 970.0 372.9 977.5 371.0 C985.0 369.1 991.2 367.3 1000.0 366.2 C1008.8 365.1 1021.2 364.6 1030.0 364.3 Z" fill="url(#hbase)"/>
<g clip-path="url(#hc)">
<path d="M1040 150 L1048 370 L1056 420 L1064 470 L1072 520 L1080 570 L1092 615 L1112 650 L1140 670 L1140 700 L1500 700 L1500 150 Z" fill="url(#shg)" filter="url(#b22)"/>
<g mask="url(#lm)"><path d="M1400 540 L1100 540 L1095 600 L1112 648 L1131 668 L1123 690 L1100 720 L1074 755 L1047 800 L1028 845 L1016 880 L1008 915 L998 960 L998 1020 L1400 1020 Z" fill="url(#shg2)" filter="url(#b11)"/></g>
<rect x="800" y="360" width="500" height="220" fill="url(#topdark)"/>
<path d="M1030.0 364.3 C1038.8 364.0 1043.5 363.8 1052.5 364.6 C1061.5 365.5 1074.4 367.4 1083.8 369.4 C1093.2 371.3 1100.8 374.0 1108.9 376.3 C1117.1 378.6 1123.7 379.2 1132.7 383.2 C1141.7 387.2 1154.1 394.5 1163.0 400.5 C1171.9 406.5 1178.3 412.2 1186.0 419.0 C1193.7 425.8 1202.3 433.6 1209.0 441.0 C1215.7 448.4 1220.8 455.8 1226.0 463.5 C1231.2 471.2 1236.1 479.8 1240.0 487.5 C1243.9 495.2 1246.8 502.4 1249.5 510.0 C1252.2 517.6 1254.6 525.0 1256.5 533.0 C1258.4 541.0 1259.9 549.8 1261.0 558.0 C1262.1 566.2 1262.8 574.0 1263.0 582.0 C1263.2 590.0 1262.8 598.3 1262.2 606.0 C1261.6 613.7 1260.5 621.5 1259.5 628.0 C1258.5 634.5 1257.3 639.9 1256.3 645.0 C1255.3 650.1 1253.8 656.2 1253.3 658.4 C1252.8 660.6 1251.8 658.5 1253.3 658.4 C1254.8 658.3 1259.1 657.8 1262.1 658.0 C1265.0 658.2 1268.5 658.1 1271.0 659.5 C1273.5 660.9 1274.9 663.6 1276.9 666.5 C1278.9 669.4 1281.2 673.2 1282.8 676.9 C1284.4 680.6 1285.7 684.9 1286.4 688.7 C1287.2 692.6 1287.7 695.5 1287.3 700.0 C1286.9 704.5 1285.9 709.3 1284.1 715.8 C1282.3 722.3 1279.7 731.4 1276.5 738.8 C1273.3 746.1 1269.2 753.2 1265.0 759.9 C1260.8 766.6 1256.1 773.7 1251.6 779.0 C1247.1 784.3 1242.9 788.3 1238.1 791.5 C1233.3 794.7 1227.6 796.7 1222.8 798.2 C1218.0 799.7 1214.0 800.3 1209.4 800.5 C1204.8 800.7 1197.9 797.3 1195.0 799.2 C1192.1 801.1 1193.0 808.5 1192.0 812.0 C1191.0 815.5 1190.7 815.9 1189.2 820.0 C1187.7 824.1 1185.8 831.7 1183.0 836.5 C1180.2 841.3 1177.0 844.6 1172.7 848.9 C1168.4 853.2 1163.3 857.3 1157.3 862.3 C1151.3 867.3 1145.2 872.6 1136.6 878.8 C1128.0 885.0 1116.0 893.0 1105.7 899.4 C1095.4 905.8 1085.0 911.3 1074.7 917.0 C1064.4 922.7 1054.1 928.2 1043.8 933.5 C1033.5 938.8 1023.1 944.6 1012.8 949.0 C1002.5 953.4 991.0 957.4 981.9 959.9 C972.8 962.4 965.6 963.5 958.1 964.1 C950.6 964.7 943.6 964.2 936.8 963.5 C930.0 962.8 923.6 961.7 917.5 959.7 C911.4 957.8 905.0 955.1 900.4 951.8 C895.8 948.5 892.7 945.2 889.7 940.0 C886.7 934.8 885.1 928.3 882.3 920.8 C879.4 913.3 876.0 904.0 872.6 895.1 C869.2 886.2 865.9 877.4 862.0 867.4 C858.1 857.4 853.4 846.0 849.1 835.3 C844.8 824.6 840.2 813.2 836.3 803.2 C832.4 793.2 828.6 784.4 825.6 775.5 C822.6 766.6 820.1 758.7 818.2 749.8 C816.4 740.9 815.3 730.3 814.5 722.0 C813.7 713.7 813.4 706.3 813.4 700.0 C813.4 693.7 814.6 690.0 814.7 684.2 C814.8 678.4 814.6 671.1 814.0 665.0 C813.4 658.9 811.8 654.0 811.1 647.4 C810.4 640.8 810.0 633.2 810.0 625.3 C810.0 617.4 810.4 608.8 811.1 600.2 C811.8 591.6 813.0 581.6 814.0 573.7 C815.0 565.8 816.3 558.6 817.2 553.0 C818.1 547.4 818.7 544.7 819.5 540.0 C820.3 535.3 821.1 529.8 822.1 524.7 C823.1 519.6 824.4 514.6 825.8 509.3 C827.1 504.0 828.6 497.9 830.2 493.0 C831.8 488.1 833.5 484.5 835.4 480.0 C837.3 475.5 839.3 470.8 841.8 466.0 C844.2 461.2 846.9 455.9 850.1 451.0 C853.3 446.1 857.2 441.0 860.8 436.5 C864.4 432.0 867.8 427.9 871.8 423.8 C875.8 419.7 879.9 415.8 884.5 412.0 C889.1 408.2 894.2 404.4 899.5 401.0 C904.8 397.6 910.7 394.3 916.5 391.5 C922.3 388.7 928.1 386.4 934.5 384.0 C940.9 381.6 947.8 379.5 955.0 377.3 C962.2 375.1 970.0 372.9 977.5 371.0 C985.0 369.1 991.2 367.3 1000.0 366.2 C1008.8 365.1 1021.2 364.6 1030.0 364.3 Z" stroke="#6a6a6a" stroke-width="26" filter="url(#b8)" opacity=".38"/>

<!-- brow / socket shadows -->
<path d="M812 612 Q840 616 870 628 Q895 640 908 660 L903 676 Q895 660 881 648 Q863 639 845 641 Q830 646 821 664 L812 660 Z" fill="#b4b4b4" filter="url(#b8)" opacity=".75"/>
<path d="M820 664 Q822 700 845 716 Q870 722 890 708" stroke="#d0d0d0" stroke-width="5" filter="url(#b3)" opacity=".8"/>
<path d="M948 640 Q975 622 1023 626 Q1070 630 1106 656 L1100 668 Q1078 648 1050 640 Q1023 637 997 644 Q985 655 978 684 L966 690 Q955 670 948 640 Z" fill="#b0b0b0" filter="url(#b8)" opacity=".8"/>
<path d="M934 650 Q940 700 952 735" stroke="#b0b0b0" stroke-width="12" filter="url(#b5)" opacity=".75"/>
<path d="M908 660 Q905 700 899 735" stroke="#c4c4c4" stroke-width="8" filter="url(#b5)" opacity=".8"/>
<path d="M1100 660 Q1116 664 1122 680 Q1112 700 1098 712" stroke="#dedede" stroke-width="9" filter="url(#b5)" opacity=".8"/>
<!-- left eye -->
<path d="M821.0 668.0 C820.8 670.7 818.8 678.8 819.5 684.0 C820.2 689.2 821.9 694.4 825.0 699.0 C828.1 703.6 833.2 708.2 838.0 711.5 C842.8 714.8 848.7 717.9 854.0 719.0 C859.3 720.1 864.8 719.4 870.0 718.0 C875.2 716.6 880.4 713.8 885.0 710.5 C889.6 707.2 894.2 702.3 897.5 698.0 C900.8 693.7 903.7 687.0 904.9 684.8" stroke="#e6e6e6" stroke-width="6.500" filter="url(#b1)"/>
<path d="M819.0 690.0 C820.2 692.7 822.5 701.3 826.0 706.0 C829.5 710.7 835.0 715.0 840.0 718.0 C845.0 721.0 850.7 723.2 856.0 724.0 C861.3 724.8 866.7 724.2 872.0 722.5 C877.3 720.8 883.3 717.6 888.0 714.0 C892.7 710.4 898.0 703.2 900.0 701.0" stroke="#c6c6c6" stroke-width="2.200" filter="url(#b3)"/>
<path d="M823.0 663.2 C824.2 661.1 826.5 654.1 830.2 650.6 C834.0 647.1 840.0 644.0 845.5 642.5 C851.0 641.0 857.5 640.4 863.5 641.6 C869.5 642.8 876.2 646.1 881.5 649.7 C886.8 653.3 891.4 658.9 895.0 663.2 C898.6 667.6 901.5 672.2 903.1 675.8 C904.8 679.4 904.6 683.3 904.9 684.8 L904.9 684.8 C903.9 685.2 900.5 685.5 898.6 687.0 C896.7 688.5 896.1 690.9 893.2 693.8 C890.4 696.7 885.7 701.6 881.5 704.6 C877.3 707.6 872.5 710.4 868.0 711.8 C863.5 713.1 859.0 713.8 854.5 712.7 C850.0 711.7 845.0 709.0 841.0 705.5 C837.0 702.0 832.8 696.6 830.2 692.0 C827.7 687.4 827.1 680.9 825.7 677.6 C824.3 674.3 822.6 672.9 822.0 672.0 Z" fill="#e2e2e2"/>
<path d="M822.0 672.0 C822.6 672.9 824.3 674.3 825.7 677.6 C827.1 680.9 827.7 687.4 830.2 692.0 C832.8 696.6 837.0 702.0 841.0 705.5 C845.0 709.0 850.0 711.7 854.5 712.7 C859.0 713.8 863.5 713.1 868.0 711.8 C872.5 710.4 877.3 707.6 881.5 704.6 C885.7 701.6 890.4 696.7 893.2 693.8 C896.1 690.9 897.7 688.1 898.6 687.0" stroke="#cdcdcd" stroke-width="5" filter="url(#b3)" opacity=".7"/>
<path d="M825.7 675.8 C826.8 673.7 828.7 666.8 832.0 663.2 C835.3 659.6 840.2 655.9 845.5 654.2 C850.8 652.6 858.0 652.2 863.5 653.3 C869.0 654.3 874.8 657.4 878.8 660.5 C882.8 663.6 884.5 667.9 887.8 672.2 C891.1 676.6 896.8 684.2 898.6 686.6 L898.6 687.0 C897.7 688.1 896.1 690.9 893.2 693.8 C890.4 696.7 885.7 701.6 881.5 704.6 C877.3 707.6 872.5 710.4 868.0 711.8 C863.5 713.1 859.0 713.8 854.5 712.7 C850.0 711.7 845.0 709.0 841.0 705.5 C837.0 702.0 832.8 696.6 830.2 692.0 C827.7 687.4 826.5 680.0 825.7 677.6 Z" fill="#e8e8e8"/>
<path d="M825.7 675.8 C826.8 673.7 828.7 666.8 832.0 663.2 C835.3 659.6 840.2 655.9 845.5 654.2 C850.8 652.6 858.0 652.2 863.5 653.3 C869.0 654.3 874.8 657.4 878.8 660.5 C882.8 663.6 884.5 667.9 887.8 672.2 C891.1 676.6 896.8 684.2 898.6 686.6" stroke="#c2c2c2" stroke-width="2.6" filter="url(#b1)"/>
<path d="M887.8 672.2 C888.7 673.3 891.2 676.6 893.0 679.0 C894.8 681.4 897.7 685.3 898.6 686.6" stroke="#9c9c9c" stroke-width="1.2"/>
<path d="M825.7 677.6 C826.5 680.0 827.7 687.4 830.2 692.0 C832.8 696.6 837.0 702.0 841.0 705.5 C845.0 709.0 850.0 711.7 854.5 712.7 C859.0 713.8 863.5 713.1 868.0 711.8 C872.5 710.4 877.3 707.6 881.5 704.6 C885.7 701.6 890.4 696.7 893.2 693.8 C896.1 690.9 897.7 688.1 898.6 687.0" stroke="#bcbcbc" stroke-width="1.3"/>
<path d="M823.0 663.2 C824.2 661.1 826.5 654.1 830.2 650.6 C834.0 647.1 840.0 644.0 845.5 642.5 C851.0 641.0 857.5 640.4 863.5 641.6 C869.5 642.8 876.2 646.1 881.5 649.7 C886.8 653.3 891.4 658.9 895.0 663.2 C898.6 667.6 901.5 672.2 903.1 675.8 C904.8 679.4 904.6 683.3 904.9 684.8" stroke="#bebebe" stroke-width="1.6" filter="url(#b1)"/>
<!-- right eye -->
<path d="M975.0 688.0 C976.5 690.3 980.2 697.8 984.0 702.0 C987.8 706.2 992.5 709.9 998.0 713.0 C1003.5 716.1 1010.5 719.2 1017.0 720.5 C1023.5 721.8 1030.3 721.9 1037.0 721.0 C1043.7 720.1 1050.5 717.9 1057.0 715.0 C1063.5 712.1 1070.3 707.8 1076.0 703.5 C1081.7 699.2 1086.8 694.4 1091.0 689.5 C1095.2 684.6 1099.6 676.6 1101.3 674.0" stroke="#e5e5e5" stroke-width="6.500" filter="url(#b1)"/>
<path d="M972.0 694.0 C973.8 696.3 978.7 703.8 983.0 708.0 C987.3 712.2 992.2 716.0 998.0 719.0 C1003.8 722.0 1011.3 724.8 1018.0 726.0 C1024.7 727.2 1031.2 727.5 1038.0 726.5 C1044.8 725.5 1052.2 723.1 1059.0 720.0 C1065.8 716.9 1073.0 712.5 1079.0 708.0 C1085.0 703.5 1092.3 695.5 1095.0 693.0" stroke="#c4c4c4" stroke-width="2.200" filter="url(#b3)"/>
<path d="M978.0 686.6 C979.3 683.5 982.7 674.8 986.0 668.0 C989.3 661.2 991.6 650.8 997.8 646.1 C1004.0 641.4 1014.3 640.5 1023.0 639.8 C1031.7 639.0 1041.0 639.8 1050.0 641.6 C1059.0 643.4 1069.5 647.2 1077.0 650.6 C1084.5 654.0 1091.0 658.4 1095.0 662.3 C1099.0 666.2 1100.2 672.0 1101.3 674.0 L1101.3 674.0 C1100.1 674.8 1096.5 676.4 1094.0 678.5 C1091.5 680.6 1089.6 683.1 1086.0 686.6 C1082.4 690.1 1077.8 695.3 1072.5 699.2 C1067.2 703.1 1060.5 707.3 1054.5 710.0 C1048.5 712.7 1042.5 714.5 1036.5 715.4 C1030.5 716.3 1024.5 716.4 1018.5 715.4 C1012.5 714.4 1005.8 711.8 1000.5 709.1 C995.2 706.4 990.8 702.7 987.0 699.2 C983.2 695.8 979.5 690.2 978.0 688.4 Z" fill="#e3e3e3"/>
<path d="M978.0 686.6 C979.3 683.5 982.7 674.8 986.0 668.0 C989.3 661.2 991.6 650.8 997.8 646.1 C1004.0 641.4 1014.3 640.5 1023.0 639.8 C1031.7 639.0 1041.0 639.8 1050.0 641.6 C1059.0 643.4 1069.5 647.2 1077.0 650.6 C1084.5 654.0 1091.0 658.4 1095.0 662.3 C1099.0 666.2 1100.2 672.0 1101.3 674.0" stroke="#b8b8b8" stroke-width="1.800" filter="url(#b1)"/>
<path d="M978.0 686.6 C980.0 683.9 985.2 674.9 989.7 670.4 C994.2 665.9 998.7 662.1 1005.0 659.6 C1011.3 657.1 1020.0 655.6 1027.5 655.1 C1035.0 654.6 1042.5 655.2 1050.0 656.9 C1057.5 658.5 1066.2 662.1 1072.5 665.0 C1078.8 667.9 1084.0 671.8 1087.8 674.0 C1091.5 676.2 1093.8 677.8 1095.0 678.5 L1094.0 678.5 C1092.7 679.9 1089.6 683.1 1086.0 686.6 C1082.4 690.1 1077.8 695.3 1072.5 699.2 C1067.2 703.1 1060.5 707.3 1054.5 710.0 C1048.5 712.7 1042.5 714.5 1036.5 715.4 C1030.5 716.3 1024.5 716.4 1018.5 715.4 C1012.5 714.4 1005.8 711.8 1000.5 709.1 C995.2 706.4 990.8 702.7 987.0 699.2 C983.2 695.8 979.5 690.2 978.0 688.4 Z" fill="url(#reyeg)"/>
<path d="M978.0 686.6 C980.0 683.9 985.2 674.9 989.7 670.4 C994.2 665.9 998.7 662.1 1005.0 659.6 C1011.3 657.1 1020.0 655.6 1027.5 655.1 C1035.0 654.6 1042.5 655.2 1050.0 656.9 C1057.5 658.5 1066.2 662.1 1072.5 665.0 C1078.8 667.9 1084.0 671.8 1087.8 674.0 C1091.5 676.2 1093.8 677.8 1095.0 678.5" stroke="#c4c4c4" stroke-width="2.6" filter="url(#b1)"/>
<path d="M978.0 688.4 C979.5 690.2 983.2 695.8 987.0 699.2 C990.8 702.7 995.2 706.4 1000.5 709.1 C1005.8 711.8 1012.5 714.4 1018.5 715.4 C1024.5 716.4 1030.5 716.3 1036.5 715.4 C1042.5 714.5 1048.5 712.7 1054.5 710.0 C1060.5 707.3 1067.2 703.1 1072.5 699.2 C1077.8 695.3 1082.4 690.1 1086.0 686.6 C1089.6 683.1 1092.7 679.9 1094.0 678.5" stroke="#b8b8b8" stroke-width="1.4"/>
<path d="M980.0 692.0 C981.7 694.0 986.2 700.4 990.0 704.0 C993.8 707.6 998.0 710.9 1003.0 713.5 C1008.0 716.1 1014.2 718.5 1020.0 719.5 C1025.8 720.5 1031.8 720.4 1038.0 719.5 C1044.2 718.6 1050.7 716.8 1057.0 714.0 C1063.3 711.2 1070.5 706.7 1076.0 702.5 C1081.5 698.3 1087.7 691.2 1090.0 689.0" stroke="#d2d2d2" stroke-width="4" filter="url(#b3)" opacity=".8"/>
<path d="M1087.800 674 L1095 678.500 L1101 674.500" stroke="#cfcfcf" stroke-width="1.500"/>
<!-- nose -->
<path d="M921 640 Q918 700 906 750 Q900 775 901 790" stroke="#ececec" stroke-width="11" filter="url(#b5)" opacity=".95"/>
<path d="M905 700 Q899 735 890 760 Q886 775 886 785" stroke="#c6c6c6" stroke-width="5" filter="url(#b3)" opacity=".85"/>
<path d="M931 680 Q940 705 952 716 Q957 745 967 774 Q967 795 957 801 Q940 805 924 800 Q915 792 914 776 Q918 745 923 711 Z" fill="#b4b4b4" filter="url(#b5)"/>
<path d="M944 758 Q962 768 966 782 Q962 797 950 801 Q934 801 928 790 Q932 772 944 758 Z" fill="#8e8e8e" filter="url(#b5)" opacity=".75"/>
<ellipse cx="899" cy="784" rx="9" ry="13" fill="#e8e8e8" filter="url(#b3)" opacity=".9"/>
<path d="M896 802 Q906 810 920 805.500 Q935 807 946 803" stroke="#8c8c8c" stroke-width="5.500" filter="url(#b3)" opacity=".9"/>
<path d="M902 808 Q912 814 922 810" stroke="#bdbdbd" stroke-width="6" filter="url(#b5)" opacity=".8"/>
<path d="M884.600 779 Q884.400 786 887 791 Q890 796 894.500 799.500" stroke="#2a2a2a" stroke-width="1.300" stroke-dasharray="3 1.500 5 1.500 2 1"/><path d="M889.500 758.500 L889 761.500" stroke="#555" stroke-width="1.100"/>
<path d="M915 799.500 Q920 795 927 794.700" stroke="#3c3c3c" stroke-width="1.500"/>
<!-- mouth -->
<path d="M880 838 Q925 826 980 842 L1004 851 L925 856 L876 848 Z" fill="#d2d2d2" filter="url(#b5)" opacity=".8"/>
<path d="M869.400 844.300 Q877 849 885.500 851.300 Q896 853.500 906.800 854.500 Q915 855 922.900 857.700 Q930 857.500 936.800 855.600 Q955 856 970.900 856.200 Q985 856.200 996.600 855.600 Q1003 854.500 1008.300 851.800" stroke="#8a8a8a" stroke-width="1.600"/>
<path d="M880 854 Q925 866 1000 859" stroke="#c4c4c4" stroke-width="4" filter="url(#b3)" opacity=".8"/>
<path d="M889.700 871.600 Q905 880 919.700 883.400 Q935 884 949.600 881.200 Q962 878 971 873.800" stroke="#adadad" stroke-width="6" filter="url(#b5)" opacity=".9"/>
<path d="M1009 846 Q1015 853 1013.700 863" stroke="#c2c2c2" stroke-width="2.500" filter="url(#b1)"/>
<path d="M866 842 Q870 848 870 855" stroke="#c8c8c8" stroke-width="2" filter="url(#b1)"/>

</g>
<!-- ear -->
<path d="M1254.4 657.4 C1258.2 657.1 1260.1 657.9 1263.0 658.3 C1265.9 658.7 1268.8 658.1 1271.7 659.7 C1274.6 661.3 1278.1 664.3 1280.3 667.9 C1282.5 671.5 1284.0 676.5 1285.1 681.3 C1286.1 686.1 1286.8 690.9 1286.6 696.6 C1286.4 702.4 1285.8 708.8 1284.1 715.8 C1282.4 722.8 1279.7 731.4 1276.5 738.8 C1273.3 746.1 1269.2 753.2 1265.0 759.9 C1260.8 766.6 1256.1 773.7 1251.6 779.0 C1247.1 784.3 1242.9 788.3 1238.1 791.5 C1233.3 794.7 1227.6 796.7 1222.8 798.2 C1218.0 799.7 1214.0 800.3 1209.4 800.5 C1204.8 800.7 1196.9 801.3 1195.0 799.2 C1193.1 797.1 1196.5 794.5 1198.0 788.0 C1199.5 781.5 1201.7 770.5 1204.0 760.0 C1206.3 749.5 1209.3 735.8 1212.0 725.0 C1214.7 714.2 1217.3 703.8 1220.0 695.0 C1222.7 686.2 1224.7 677.8 1228.0 672.0 C1231.3 666.2 1235.6 662.4 1240.0 660.0 C1244.4 657.6 1250.6 657.7 1254.4 657.4 Z" fill="url(#earg)"/>
<g clip-path="url(#ec)">

<path d="M1222 684 Q1230 668 1253.500 659.500 Q1272 658 1284 677.500 Q1288 697 1282 720 Q1276 738 1266 756" stroke="#c6c6c6" stroke-width="9" filter="url(#b1)"/>
<path d="M1226 678 Q1232 668 1244 663" stroke="#dedede" stroke-width="4" filter="url(#b3)"/>
<path d="M1258 662 Q1270 662 1277 672" stroke="#d4d4d4" stroke-width="3" filter="url(#b1)"/>
<path d="M1240 682 Q1252 669 1265 675 Q1275 690 1273.500 712 Q1271 730 1262 746" stroke="#6e6e6e" stroke-width="4.500" filter="url(#b1)"/>
<ellipse cx="1249" cy="698" rx="13" ry="19" fill="#b2b2b2" filter="url(#b3)"/>
<path d="M1232 690 Q1228 706 1232 722" stroke="#8e8e8e" stroke-width="6" filter="url(#b3)"/>
<path d="M1227 723.500 Q1244 719 1260 722" stroke="#5e5e5e" stroke-width="2.200" filter="url(#b1)"/>
<path d="M1232 729 Q1248 727 1263 727 L1266 734" stroke="#dadada" stroke-width="3.500" filter="url(#b1)"/>
<path d="M1232 745 Q1250 742 1266 738" stroke="#c4c4c4" stroke-width="14" filter="url(#b3)"/>
<path d="M1222 772 Q1240 768 1256 752" stroke="#bababa" stroke-width="9" filter="url(#b3)"/>
<path d="M1228.600 728 L1231.500 735 L1229.500 745 L1226 752 L1222 758 L1216 771 L1218 772.500 L1232 757" stroke="#1c1c1c" stroke-width="1.500"/>
<path d="M1218 772 Q1235 760 1250 746" stroke="#8a8a8a" stroke-width="1.600" filter="url(#b1)"/>

</g>
<path d="M1000.0 366.2 C1005.0 365.9 1021.2 364.6 1030.0 364.3 C1038.8 364.0 1043.5 363.8 1052.5 364.6 C1061.5 365.5 1074.4 367.4 1083.8 369.4 C1093.2 371.3 1100.8 374.0 1108.9 376.3 C1117.1 378.6 1123.7 379.2 1132.7 383.2 C1141.7 387.2 1154.1 394.5 1163.0 400.5 C1171.9 406.5 1178.3 412.2 1186.0 419.0 C1193.7 425.8 1202.3 433.6 1209.0 441.0 C1215.7 448.4 1220.8 455.8 1226.0 463.5 C1231.2 471.2 1236.1 479.8 1240.0 487.5 C1243.9 495.2 1246.8 502.4 1249.5 510.0 C1252.2 517.6 1254.6 525.0 1256.5 533.0 C1258.4 541.0 1259.9 549.8 1261.0 558.0 C1262.1 566.2 1262.8 574.0 1263.0 582.0 C1263.2 590.0 1262.8 598.3 1262.2 606.0 C1261.6 613.7 1260.5 621.5 1259.5 628.0 C1258.5 634.5 1257.3 639.9 1256.3 645.0 C1255.3 650.1 1253.8 656.2 1253.3 658.4" stroke="#161616" stroke-width="1.9" stroke-linecap="round"/>
<path d="M1195.0 799.2 C1194.5 801.3 1193.0 808.5 1192.0 812.0 C1191.0 815.5 1190.7 815.9 1189.2 820.0 C1187.7 824.1 1185.8 831.7 1183.0 836.5 C1180.2 841.3 1177.0 844.6 1172.7 848.9 C1168.4 853.2 1163.3 857.3 1157.3 862.3 C1151.3 867.3 1145.2 872.6 1136.6 878.8 C1128.0 885.0 1116.0 893.0 1105.7 899.4 C1095.4 905.8 1085.0 911.3 1074.7 917.0 C1064.4 922.7 1054.1 928.2 1043.8 933.5 C1033.5 938.8 1023.1 944.6 1012.8 949.0 C1002.5 953.4 991.0 957.4 981.9 959.9 C972.8 962.4 965.6 963.5 958.1 964.1 C950.6 964.7 943.6 964.2 936.8 963.5 C930.0 962.8 923.6 961.7 917.5 959.7 C911.4 957.8 905.0 955.1 900.4 951.8 C895.8 948.5 892.7 945.2 889.7 940.0 C886.7 934.8 885.1 928.3 882.3 920.8 C879.4 913.3 876.0 904.0 872.6 895.1 C869.2 886.2 865.9 877.4 862.0 867.4 C858.1 857.4 853.4 846.0 849.1 835.3 C844.8 824.6 840.2 813.2 836.3 803.2 C832.4 793.2 828.6 784.4 825.6 775.5 C822.6 766.6 820.1 758.7 818.2 749.8 C816.4 740.9 815.3 730.3 814.5 722.0 C813.7 713.7 813.4 706.3 813.4 700.0 C813.4 693.7 814.6 690.0 814.7 684.2 C814.8 678.4 814.6 671.1 814.0 665.0 C813.4 658.9 811.8 654.0 811.1 647.4 C810.4 640.8 810.0 633.2 810.0 625.3 C810.0 617.4 810.4 608.8 811.1 600.2 C811.8 591.6 813.0 581.6 814.0 573.7 C815.0 565.8 816.3 558.6 817.2 553.0 C818.1 547.4 818.7 544.7 819.5 540.0 C820.3 535.3 821.1 529.8 822.1 524.7 C823.1 519.6 824.4 514.6 825.8 509.3 C827.1 504.0 828.6 497.9 830.2 493.0 C831.8 488.1 833.5 484.5 835.4 480.0 C837.3 475.5 839.3 470.8 841.8 466.0 C844.2 461.2 846.9 455.9 850.1 451.0 C853.3 446.1 857.2 441.0 860.8 436.5 C864.4 432.0 867.8 427.9 871.8 423.8 C875.8 419.7 879.9 415.8 884.5 412.0 C889.1 408.2 894.2 404.4 899.5 401.0 C904.8 397.6 910.7 394.3 916.5 391.5 C922.3 388.7 928.1 386.4 934.5 384.0 C940.9 381.6 947.8 379.5 955.0 377.3 C962.2 375.1 970.0 372.9 977.5 371.0 C985.0 369.1 991.2 367.3 1000.0 366.2 C1008.8 365.1 1025.0 364.6 1030.0 364.3" stroke="#161616" stroke-width="1.9" stroke-linecap="round"/>
<path d="M1254.4 657.4 C1255.8 657.5 1260.1 657.9 1263.0 658.3 C1265.9 658.7 1268.8 658.1 1271.7 659.7 C1274.6 661.3 1278.1 664.3 1280.3 667.9 C1282.5 671.5 1284.0 676.5 1285.1 681.3 C1286.1 686.1 1286.8 690.9 1286.6 696.6 C1286.4 702.4 1285.8 708.8 1284.1 715.8 C1282.4 722.8 1279.7 731.4 1276.5 738.8 C1273.3 746.1 1269.2 753.2 1265.0 759.9 C1260.8 766.6 1256.1 773.7 1251.6 779.0 C1247.1 784.3 1242.9 788.3 1238.1 791.5 C1233.3 794.7 1227.6 796.7 1222.8 798.2 C1218.0 799.7 1214.0 800.3 1209.4 800.5 C1204.8 800.7 1197.4 799.4 1195.0 799.2" stroke="#161616" stroke-width="1.9" stroke-linecap="round"/>
<path d="M1253.3 658.4 Q1243 663 1236 670 Q1230 677 1226 686" stroke="#1a1a1a" stroke-width="1.500" stroke-linecap="round" opacity=".8"/>
</svg>
<!--CANVAS-END-->
<!--SUBTOOL-START-->
<style>
#dlg{left:91px;top:181px;width:678px;height:972px;background:#383838;box-shadow:0 0 2px rgba(0,0,0,.55),0 6px 22px 4px rgba(0,0,0,.5)}
#dlgbody{left:99px;top:212px;width:661px;height:932px;background:#4a4a4a}
#catlist{left:101px;top:381px;width:226px;height:727px;background:#404040}
#catlist .t,.pt{font-size:17.6px;color:#ececec}
#catlist .t{margin-top:.7px}
#desc{left:327px;top:381px;width:431px;height:84px;background:#505050}
#props{left:327px;top:465px;width:431px;height:437px;background:#404040}
#info{left:327px;top:902px;width:432px;height:205.5px;background:#505050;border:1.5px solid #616161;border-bottom-color:#2c2c2c}
#btnrow{left:99px;top:1108px;width:661px;height:36px;background:#4a4a4a}
.sl{position:absolute;height:13px;background:#5a5a5a;border:1.5px solid #777;border-radius:1px}
.slb{position:absolute;height:1.5px;background:#777}
.slt{position:absolute;width:1.5px;height:6px;background:#777}
.val{position:absolute;white-space:nowrap;line-height:1;font-size:19px;color:#e6e6e6;text-align:right;width:60px;left:692px}
.vbar{position:absolute;background:#585858;border:1.5px solid #707070;border-radius:3px}
.hbtn{position:absolute;top:792.5px;width:54px;height:42px;background:#555;border:1.5px solid #727272;border-radius:4px}
</style>
<div class="a" id="dlg"></div>
<div class="a" id="dlgbody"></div>
<svg class="a" style="left:104px;top:189px" width="16" height="16" viewBox="0 0 16 16"><path d="M2 2 L14 14 M14 2 L2 14" stroke="#d8d8d8" stroke-width="1.6" fill="none"/></svg>
<span class="t" style="left:375px;top:188px;font-size:16.2px;color:#bcbcbc">Detail Sub-tool</span>
<!-- preview -->
<svg class="a" style="left:102px;top:216px" width="655" height="164" viewBox="102 216 655 164">
<defs><linearGradient id="pg" x1="0" x2="1" y1="0" y2="0"><stop offset="0" stop-color="#d5d5d5"/><stop offset=".35" stop-color="#c6c6c6"/><stop offset=".65" stop-color="#b2b2b2"/><stop offset=".9" stop-color="#9c9c9c"/><stop offset="1" stop-color="#929292"/></linearGradient>
<linearGradient id="cupg" x1="0" x2="1"><stop offset="0" stop-color="#d0d0d0"/><stop offset=".5" stop-color="#c2c2c2"/><stop offset="1" stop-color="#adadad"/></linearGradient></defs>
<rect x="102" y="216" width="655" height="164" fill="url(#pg)"/>
<!-- books -->
<path d="M399.3 305 L545.6 309 L545.6 321 L479.6 336.5 L399.3 315.6 Z" fill="#b4b4b4" opacity=".75"/>
<path d="M399.3 305 L479 326 L545.6 309" fill="none" stroke="#a8a8a8" stroke-width="1"/>
<path d="M400.4 286 L453.2 272.7 L552.2 286 L552.2 300.2 L506 316.7 L400.4 304.6 Z" fill="#bcbcbc" opacity=".9"/>
<path d="M400.4 286 L453.2 272.7 L552.2 286 L506 300 Z" fill="#b9b9b9"/>
<path d="M400.4 286 L506 300 L552.2 286" fill="none" stroke="#a6a6a6" stroke-width="1"/>
<path d="M506 300 L506 316.7 L552.2 300.2 L552.2 286 Z" fill="#a9a9a9" opacity=".8"/>
<!-- cup -->
<ellipse cx="384" cy="357" rx="39" ry="9.5" fill="#b9b9b9" opacity=".8"/>
<path d="M406 335 Q421 332 418 344 Q414 355 401 357" fill="none" stroke="#b5b5b5" stroke-width="3.5"/>
<path d="M362.5 329 Q362 356 376 362 L394 362 Q407 355 407 329 Z" fill="url(#cupg)"/>
<ellipse cx="384.8" cy="329" rx="22.3" ry="5" fill="#bdbdbd" stroke="#cfcfcf" stroke-width="1"/>
<!-- laptop -->
<path d="M632.5 224.3 Q635 222.5 640 224 L746 247.5 Q752.5 250 751 256 L714 352 Q712.5 355.5 709 354.5 L590.7 320 Z" fill="#a3a3a3" stroke="#b4b4b4" stroke-width="1"/>
<path d="M633.6 234.2 L741.4 255 L708.4 342 L600.6 313.4 Z" fill="#7b7b7b"/>
<path d="M590.7 320 L712.8 355 Q710 362 700 365 L640 376 Q634 377 626 374 L512 345 Q507 342.5 513 340.5 Z" fill="#a6a6a6" stroke="#b0b0b0" stroke-width=".8"/>
<path d="M578.6 325.5 L690.8 350.8 L653.4 364 L544.5 335.4 Z" fill="#8a8a8a"/>
<path d="M566 343 L600 351.5 L585 357 L551 348 Z" fill="#9c9c9c"/>
</svg>
<div class="a" style="left:102px;top:216px;width:655px;height:164px;overflow:hidden"><span class="t" style="left:215px;top:148px;font-size:17.95px;color:#0a0a0a">[Mengedit Model kepala 3D]</span></div>
<!-- categories -->
<div class="a" id="catlist">
<div class="a" style="left:3px;top:239px;width:219px;height:30px;background:#606c89;border-radius:2px"></div>
<span class="t" style="left:6px;top:10.5px">Operasi</span>
<span class="t" style="left:6px;top:44px">Mouse/Gestur</span>
<span class="t" style="left:6px;top:77.5px">Daftar objek</span>
<span class="t" style="left:6px;top:111px">Transformasi</span>
<span class="t" style="left:6px;top:144.5px">Kamera</span>
<span class="t" style="left:14.5px;top:178px">Lensa</span>
<span class="t" style="left:6px;top:211.5px">Model kepala</span>
<span class="t" style="left:14.5px;top:245px">Fitur wajah</span>
<span class="t" style="left:14.5px;top:278.5px">Garis luar</span>
<span class="t" style="left:6px;top:312px">Sumber Cahaya</span>
<span class="t" style="left:6px;top:345.5px">Kabut</span>
<span class="t" style="left:6px;top:379px">Panorama</span>
<span class="t" style="left:6px;top:412.5px">Preferensi</span>
<div class="a" style="left:4px;top:698px;width:24px;height:24px;background:#5a5a5a;border:1.5px solid #787878;border-radius:3px"></div>
<span class="t" style="left:34.5px;top:701.5px">Perlihatkan kategori</span>
</div>
<div class="a" id="desc"><span class="t pt" style="left:8px;top:34px">Sesuaikan fitur wajah dari model kepala 3D.</span></div>
<div class="a" id="props"></div>
<!--PROPS-START-->
<!-- eye + play buttons -->
<div class="a" style="left:332px;top:471px;width:23px;height:23px;background:#606c8b;border:1.5px solid #7681a0;border-radius:3px"></div>
<svg class="a" style="left:332px;top:471px" width="23" height="23" viewBox="0 0 23 23" fill="none"><path d="M3.2 13.2 Q4 8 11.5 8 Q19 8 19.8 13.2" stroke="#d6d9e2" stroke-width="1.8" stroke-linecap="round"/><path d="M5 14 Q11.5 17.5 18 14" stroke="#d6d9e2" stroke-width="1.2"/><circle cx="11.5" cy="12.3" r="2.9" fill="#d6d9e2"/></svg>
<div class="a" style="left:360px;top:471px;width:17px;height:23px;background:#575757;border:1.5px solid #6c6c6c;border-radius:3px"></div>
<svg class="a" style="left:360px;top:471px" width="17" height="23" viewBox="0 0 17 23"><path d="M4 6.5 L13.5 11.5 L4 16.5 Z" fill="#bdbdbd"/></svg>
<div class="vbar" style="left:332px;top:503px;width:23px;height:393px"></div>
<div class="vbar" style="left:360px;top:503px;width:17px;height:393px"></div>
<svg class="a" style="left:360px;top:688px" width="17" height="20" viewBox="0 0 17 20"><path d="M4 5 L13.5 10 L4 15 Z" fill="#c6c6c6"/></svg>
<!-- tree line -->
<svg class="a" style="left:386px;top:478px" width="20" height="226" viewBox="386 478 20 226" fill="none"><rect x="388.8" y="481" width="4.6" height="4.6" fill="#1c1c1c"/><path d="M391.1 484 L391.1 699.3 L401.5 699.3" stroke="#1c1c1c" stroke-width="1.4"/></svg>
<span class="t pt" style="left:404px;top:473.5px">Fitur wajah</span>
<span class="t pt" style="left:404px;top:510.5px">Alis</span>
<!-- reset dial -->
<svg class="a" style="left:540px;top:505px" width="28" height="28" viewBox="0 0 28 28" fill="none"><path d="M14 3.6 A10.6 10.6 0 1 1 5.4 8" stroke="#d0d0d0" stroke-width="1.6"/><path d="M4.8 9 A10.6 10.6 0 0 1 12 3.8" stroke="#d0d0d0" stroke-width="1.6" stroke-dasharray="0.1 2.9" stroke-linecap="round"/><path d="M14 3 L14 13" stroke="#d0d0d0" stroke-width="1.6"/><circle cx="14" cy="14.3" r="3" fill="#d0d0d0"/></svg>
<!-- sliders -->
<span class="t pt" style="left:571px;top:503.5px">Ketinggian</span><span class="val" style="top:508.5px">-5</span>
<div class="sl" style="left:581px;top:529.5px;width:60.5px"></div><div class="slb" style="left:641px;top:541px;width:67.5px"></div><div class="slt" style="left:707px;top:536.5px"></div>
<span class="t pt" style="left:571px;top:550.5px">Lebar</span><span class="val" style="top:555.5px">-30</span>
<div class="sl" style="left:581px;top:576.5px;width:45.5px"></div><div class="slb" style="left:626px;top:588px;width:82.5px"></div><div class="slt" style="left:707px;top:583.5px"></div>
<span class="t pt" style="left:571px;top:597.5px">Miringkan</span><span class="val" style="top:602.5px">5</span>
<div class="sl" style="left:581px;top:623.5px;width:67.5px"></div><div class="slb" style="left:648px;top:635px;width:60.5px"></div><div class="slt" style="left:707px;top:630.5px"></div>
<span class="t pt" style="left:571px;top:644.5px">Protrusi</span><span class="val" style="top:649.5px">-3</span>
<div class="sl" style="left:581px;top:670.5px;width:62px"></div><div class="slb" style="left:642.5px;top:682px;width:66px"></div><div class="slt" style="left:707px;top:677.5px"></div>
<!-- head diagram -->
<svg class="a" style="left:400px;top:553px" width="160" height="222" viewBox="400 553 160 222" fill="none" stroke-linejoin="round">
<path d="M417.7 558.5 L411 558.5 Q405.6 558.5 405.6 564 L405.6 762.5 Q405.6 768 411 768 L417.7 768 Z" fill="#585858" stroke="#161616" stroke-width="1.4"/>
<path d="M417.7 558.5 L429 558.5 M417.7 768 L429 768" stroke="#161616" stroke-width="1.4"/>
<path d="M429 558.5 L510 558.5 M429 768 L493.5 768" stroke="#161616" stroke-width="1.4" stroke-dasharray="1.2 1.6"/>
<path d="M551.8 560.5 Q531 556.5 510 559 Q480 564 462 584 Q449 599 447 620.5 L447 637 Q445 650 441 660 L432 672 Q429.5 676 432 680 Q435 685 441 688.5 Q439 692 441 696 Q443 699 446 700.5 Q444 703 446 706 Q450 715 452 728 Q456 735 466 735.6 Q478 735 488.5 732 Q493 750 493.5 768 L551.8 768 Z" fill="#585858" stroke="#161616" stroke-width="1.4"/>
<path d="M446 701.5 L459 701.5" stroke="#161616" stroke-width="1.3"/>
<path d="M488.5 732 Q520 722 551.8 705.6" stroke="#161616" stroke-width="1.4"/>
<rect x="447" y="620.6" width="104.8" height="16.6" fill="#6a93a8" stroke="#161616" stroke-width="1.3"/>
<path d="M453 630.7 Q464 624.5 484 631.8" stroke="#161616" stroke-width="1.3"/>
<path d="M443 665.7 L516.4 665.7 M440.5 689 L551.8 689 M516.4 637 L516.4 689" stroke="#161616" stroke-width="1.4"/>
<path d="M453 644.5 Q460 644.5 459.5 648 L458.8 660.4 L474.8 653 Q468 647 459.5 646" stroke="#161616" stroke-width="1.3"/>
<path d="M541 647 Q528 644 525 664 Q523 680 530 684 Q541 683 546 664 Q549 648 541 643.5 Q529 640 523 650" stroke="#161616" stroke-width="1.3"/>
<path d="M526 668 Q531 668 531.5 678" stroke="#161616" stroke-width="1.2"/>
<path d="M551.8 559 L551.8 768" stroke="#161616" stroke-width="1.4"/>
</svg>
<!-- head buttons -->
<div class="hbtn" style="left:403.5px"></div>
<div class="hbtn" style="left:460.5px;background:#5f6b89;border-color:#7480a0"></div>
<div class="hbtn" style="left:517.5px"></div>
<svg class="a" style="left:403px;top:792px" width="170" height="43" viewBox="403 792 170 43">
<!-- left half-face -->
<path d="M430.5 799.5 A10.5 11 0 0 0 423.5 818 L424.3 826 L430.5 826 Z" fill="#d0d0d0"/>
<path d="M432 799.5 A10.5 11 0 0 1 439 818 L438.2 826 L432 826 Z" fill="#8c8c8c"/>
<circle cx="426.3" cy="809" r="1.5" fill="#555"/><path d="M427.5 816.2 L430.5 816.2" stroke="#555" stroke-width="1.1"/>
<!-- center face -->
<path d="M487.5 799.3 A11 11.3 0 0 0 480.2 818.5 L481 826 L494 826 L494.8 818.5 A11 11.3 0 0 0 487.5 799.3 Z" fill="#d2d2d2"/>
<circle cx="483.2" cy="809.3" r="1.6" fill="#5f6b89"/><circle cx="491.8" cy="809.3" r="1.6" fill="#5f6b89"/><path d="M485.3 816.5 L489.7 816.5" stroke="#5f6b89" stroke-width="1.2"/>
<!-- right half-face -->
<path d="M543.5 799.5 A10.5 11 0 0 0 536.5 818 L537.3 826 L543.5 826 Z" fill="#8c8c8c"/>
<path d="M545 799.5 A10.5 11 0 0 1 552 818 L551.2 826 L545 826 Z" fill="#d0d0d0"/>
<circle cx="549.2" cy="809" r="1.5" fill="#555"/><path d="M545 816.2 L548 816.2" stroke="#555" stroke-width="1.1"/>
</svg>
<!--PROPS-END-->
<div class="a" id="info"></div>
<div class="a" style="left:335px;top:908.5px;width:46.5px;height:46px;background:#d2d2d2;border-radius:8px"></div>
<div class="a" style="left:354.5px;top:914px;width:8px;height:8px;border-radius:4px;background:#4a4a4a"></div>
<div class="a" style="left:355px;top:925.5px;width:7px;height:24px;border-radius:1.5px;background:#4a4a4a"></div>
<span class="t pt" style="left:385px;top:922.5px">Fitur wajah</span>
<span class="t pt" style="left:343px;top:959.5px">Pilih fitur wajah dan gunakan penggeser untuk</span>
<span class="t pt" style="left:343px;top:983px">menyesuaikan penampilan.</span>
<div class="a" id="btnrow">
<div class="a" style="left:26px;top:1px;width:303px;height:33px;background:#4f4f4f;border-radius:3px"></div>
<div class="a" style="left:334px;top:1px;width:321px;height:33px;background:#4f4f4f;border-radius:3px"></div>
<svg class="a" style="left:55px;top:4px" width="26" height="26" viewBox="0 0 26 26" fill="none"><path d="M13 3.2 A9.8 9.8 0 1 1 5.2 7" stroke="#757575" stroke-width="1.5"/><path d="M5.2 7 A9.8 9.8 0 0 1 11 3.4" stroke="#757575" stroke-width="1.5" stroke-dasharray="0.1 2.5" stroke-linecap="round"/><path d="M13 3 L13 12" stroke="#757575" stroke-width="1.5"/><circle cx="13" cy="13" r="2.6" fill="#757575"/></svg>
<span class="t" style="left:113px;top:7.5px;font-size:17.6px;color:#8c8c8c">Reset semua ke default</span>
<span class="t" style="left:340px;top:8px;font-size:16.2px;color:#8c8c8c">Simpan semua pengaturan sebagai default</span>
</div>
<!--SUBTOOL-END-->
<!--HISTORY-START-->
<style>
#hist{left:1382px;top:271px;width:390px;height:452px;background:#3a3a3a;box-shadow:0 0 2px rgba(0,0,0,.55),0 6px 22px 4px rgba(0,0,0,.45)}
#hlist{left:1391px;top:301px;width:372px;height:414px;background:#444}
#hrows{left:1391.5px;top:313px;width:361px;height:400.5px;background:#404040}
.hl{position:absolute;left:1391.5px;width:361px;height:1.8px;background:#1d1d1d}
.ht{position:absolute;left:1397px;white-space:nowrap;line-height:1;font-size:17.65px;color:#ececec;margin-top:.6px}
</style>
<div class="a" id="hist"></div>
<div class="a" id="hlist"></div>
<div class="a" id="hrows"></div>
<div class="a" style="left:1391.5px;top:675.5px;width:361px;height:38px;background:#5f6b89"></div>
<div class="a" style="left:1754px;top:334px;width:6.5px;height:377.5px;background:#5c5c5c;border-radius:3px"></div>
<svg class="a" style="left:1390px;top:276px" width="80" height="22" viewBox="1390 276 80 22" fill="none"><path d="M1395.5 283 L1410.5 283 M1395.5 287.7 L1410.5 287.7 M1395.5 292.4 L1410.5 292.4" stroke="#666" stroke-width="1.3"/><path d="M1422 281.8 L1433.6 293.2 M1433.6 281.8 L1422 293.2" stroke="#dcdcdc" stroke-width="1.5"/><path d="M1446 292.8 L1460.5 292.8" stroke="#dcdcdc" stroke-width="1.6"/></svg>
<span class="t" style="left:1548.5px;top:279px;font-size:16px;color:#b8b8b8">Riwayat</span>
<div class="hl" style="top:311.6px"></div><span class="ht" style="top:322.8px">Ubah dasar kepala model 3D</span>
<div class="hl" style="top:351.8px"></div><span class="ht" style="top:363.0px">Ubah dasar kepala model 3D</span>
<div class="hl" style="top:392.0px"></div><span class="ht" style="top:403.2px">Ubah dasar kepala model 3D</span>
<div class="hl" style="top:432.2px"></div><span class="ht" style="top:443.4px">Ubah dasar kepala model 3D</span>
<div class="hl" style="top:472.4px"></div><span class="ht" style="top:483.6px">Ubah dasar kepala model 3D</span>
<div class="hl" style="top:512.6px"></div><span class="ht" style="top:523.8px">Sesuaikan fitur wajah pada kepala model 3D</span>
<div class="hl" style="top:552.8px"></div><span class="ht" style="top:564.0px">Sesuaikan fitur wajah pada kepala model 3D</span>
<div class="hl" style="top:593.0px"></div><span class="ht" style="top:604.2px">Sesuaikan fitur wajah pada kepala model 3D</span>
<div class="hl" style="top:633.2px"></div><span class="ht" style="top:644.4px">Sesuaikan fitur wajah pada kepala model 3D</span>
<div class="hl" style="top:673.4px"></div><span class="ht" style="top:684.6px">Sesuaikan fitur wajah pada kepala model 3D</span>
<!--HISTORY-END-->
<!--BOTTOM-START-->
<style>
.bs{position:absolute;top:1306px;height:16.5px;border:1.2px solid #7c7c7c;background:#4a4a4a;overflow:hidden}
.bh{position:absolute;top:1299px;width:6px;height:29.5px;background:#6e6e6e;border:1px solid #8a8a8a;border-radius:1px}
.bt{position:absolute;white-space:nowrap;line-height:1;font-size:17.6px;letter-spacing:-0.7px;color:#ececec;top:1307.5px}
</style>
<div class="a" style="left:72px;top:1298.5px;width:536px;height:30px;background:#505050"></div>
<div class="a" style="left:70px;top:1328.5px;width:1930px;height:1.5px;background:#3c3c3c"></div>
<svg class="a" style="left:70px;top:1298px" width="540" height="58" viewBox="70 1298 540 58" fill="none">
<rect x="80.5" y="1305.5" width="110" height="16" fill="#4f4f4f" stroke="#868686" stroke-width="1.2"/>
<path d="M81 1321 L190 1306 L190 1321 Z" fill="#343434"/>
<rect x="349" y="1305.5" width="110" height="16" fill="#4f4f4f" stroke="#868686" stroke-width="1.2"/>
<path d="M349.5 1306 Q353 1307 355 1311 L355 1306 Z" fill="#343434"/>
<path d="M390 1321 Q404 1317 414 1310 Q421 1306.300 428 1306.300 L433 1306.300 Q440 1308 447 1313 L458 1320.500 L458 1321 Z" fill="#343434"/>
<rect x="138.500" y="1299.500" width="5.500" height="28.500" rx="1" fill="#6c6c6c" stroke="#8c8c8c" stroke-width="1"/>
<rect x="400.500" y="1299.500" width="5.500" height="28.500" rx="1" fill="#6c6c6c" stroke="#8c8c8c" stroke-width="1"/>
<path d="M215.500 1313.500 L229.500 1313.500" stroke="#cdcdcd" stroke-width="1.600"/>
<path d="M262.500 1313.500 L276.500 1313.500 M269.500 1306.500 L269.500 1320.500" stroke="#cdcdcd" stroke-width="1.600"/>
<rect x="311" y="1308.500" width="10.500" height="10.500" fill="#cdcdcd"/>
<path d="M484.300 1315.500 A7.300 7.300 0 1 1 498.200 1318" stroke="#cdcdcd" stroke-width="1.700"/><path d="M481.800 1312.800 L488.800 1313.600 L484.300 1319.300 Z" fill="#cdcdcd"/>
<path d="M543.700 1315.500 A7.300 7.300 0 1 0 529.800 1318" stroke="#cdcdcd" stroke-width="1.700"/><path d="M546.200 1312.800 L539.200 1313.600 L543.700 1319.300 Z" fill="#cdcdcd"/>
<path d="M584.500 1305.800 A7.700 7.700 0 1 1 578.200 1309" stroke="#cdcdcd" stroke-width="1.500"/><path d="M577.800 1309.700 A7.700 7.700 0 0 1 583 1306" stroke="#cdcdcd" stroke-width="1.500" stroke-dasharray="0.1 2.300" stroke-linecap="round"/><path d="M584.500 1305.500 L584.500 1312.500" stroke="#cdcdcd" stroke-width="1.500"/><circle cx="584.500" cy="1313.800" r="2.300" fill="#cdcdcd"/>
<path d="M82.500 1342.500 L89 1336.500 L95.500 1342.500 M82.500 1350.500 L89 1344.500 L95.500 1350.500" stroke="#7e7e7e" stroke-width="1.400"/>
</svg>
<span class="bt" style="left:77.500px">77.0</span><span class="bt" style="left:349px">0.0</span>
<div class="a" style="left:1004px;top:1300px;width:578.500px;height:27px;background:#5c5c5c;border-radius:13.500px"></div>
<div class="a" style="left:736px;top:1335px;width:528px;height:9.500px;background:#e6e6e6;border-radius:5px;box-shadow:0 0 0 1px rgba(255,255,255,.25)"></div>
<div class="a" style="left:1980px;top:477px;width:17px;height:470px;background:#5a5a5a;border-radius:8.500px"></div>
<div class="a" style="left:1998px;top:125px;width:2px;height:1172px;background:#3a3a3a"></div>
<!--BOTTOM-END-->
</body>
</html>
